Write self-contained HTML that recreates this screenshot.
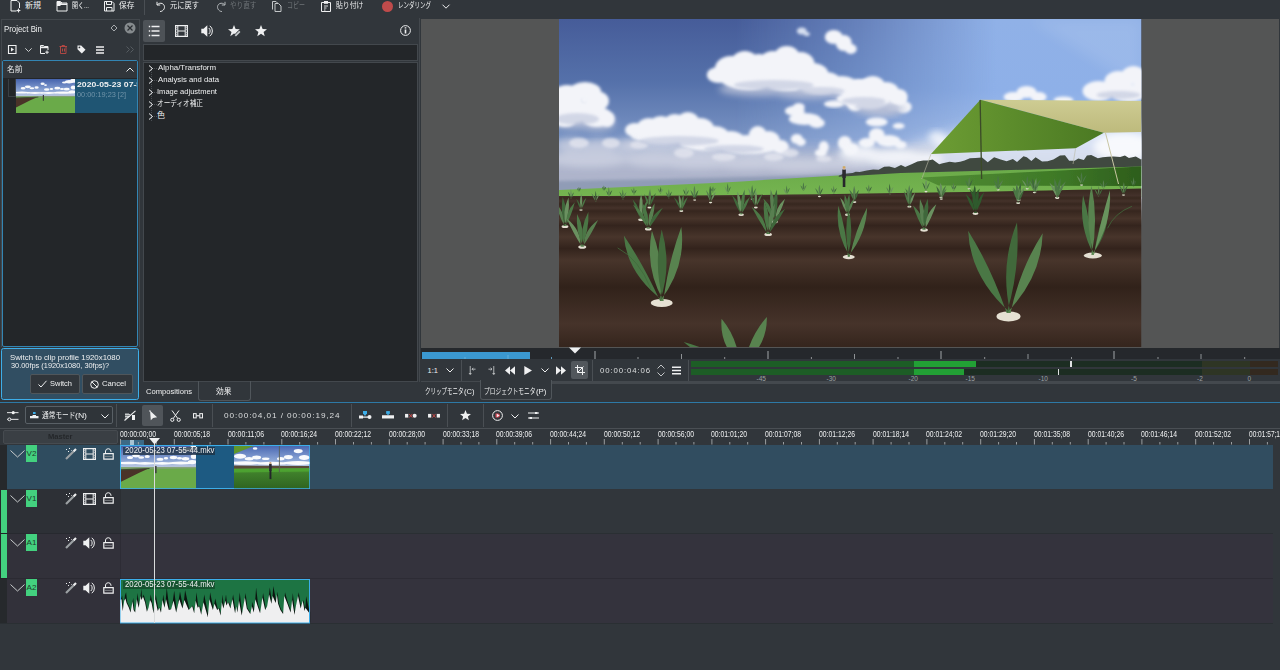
<!DOCTYPE html>
<html lang="ja"><head>
<meta charset="utf-8">
<title>Kdenlive</title>
<style>
*{box-sizing:border-box;margin:0;padding:0}
html,body{width:1280px;height:670px;overflow:hidden;background:#31363b}
body{position:relative;font-family:"Liberation Sans","Noto Sans CJK JP",sans-serif;font-size:8px;color:#eff0f1;line-height:1}
.a{position:absolute}
.t{position:absolute;white-space:nowrap;line-height:12px;height:12px;transform-origin:0 0;display:inline-block}
.dk{background:#232629}
svg{position:absolute;overflow:visible}
.mono{font-family:"Liberation Sans",sans-serif;letter-spacing:.9px}
.s{fill:none;stroke:#eff0f1;stroke-width:1}
.f{fill:#eff0f1;stroke:none}
.sep{position:absolute;width:1px;background:#4a4f54}
.rl{position:absolute;top:.2px;font-size:9px;line-height:10px;height:10px;white-space:nowrap;transform-origin:0 0;color:#eff0f1}
.tag{position:absolute;left:26px;width:11px;height:17px;background:#43d17f;color:#1f3a2b;font-size:8px;line-height:17px;text-align:center}
</style>
</head>
<body>
<!-- ===== TOP TOOLBAR ===== -->
<div id="topbar" class="a" style="left:0;top:0;width:1280px;height:16px">
<span class="t" style="left: 25px; top: 0px; transform: scaleX(1);">新規</span>
<span class="t" style="left: 71.5px; top: 0px; transform: scaleX(0.75);">開く...</span>
<span class="t" style="left: 118.5px; top: 0px; transform: scaleX(0.969);">保存</span>
<span class="t" style="left: 170px; top: 0px; transform: scaleX(0.906);">元に戻す</span>
<span class="t" style="left: 229.5px; top: 0px; color: rgb(110, 115, 119); transform: scaleX(0.828);">やり直す</span>
<span class="t" style="left: 286.5px; top: 0px; color: rgb(110, 115, 119); transform: scaleX(0.75);">コピー</span>
<span class="t" style="left: 335.5px; top: 0px; transform: scaleX(0.859);">貼り付け</span>
<span class="t" style="left: 398px; top: 0px; transform: scaleX(0.688);">レンダリング</span>
<div class="sep" style="left:144px;top:0;height:15px"></div>
<div class="a" style="left:382px;top:1px;width:11px;height:11px;border-radius:6px;background:#bf4b4b"></div>
<!-- new -->
<svg style="left:10px;top:0" width="11" height="12" viewBox="0 0 11 12"><path class="s" d="M1 .5H7L9.5 3V8M1 .5V11H6.5"></path><path class="f" d="M8.5 8l.7 1.8 1.8.7-1.8.7-.7 1.8-.7-1.8-1.8-.7 1.8-.7z"></path></svg>
<!-- open -->
<svg style="left:56px;top:1px" width="12" height="11" viewBox="0 0 12 11"><path class="s" d="M1 10V.5H4.5L6 2H11V10Z"></path><path class="f" d="M1 1H4.5L6 2.5H11V4H5L4 5H1Z"></path></svg>
<!-- save -->
<svg style="left:103.500px;top:1.200px" width="10.500" height="10.500" viewBox="0 0 10.500 10.500"><path class="s" d="M.5 .5H8L10 2.500V10H.5Z"></path><path class="s" d="M2.500 .5V3.500H7.500V.5M2.500 10V6.500H8V10"></path></svg>
<!-- undo -->
<svg style="left:156px;top:.5px" width="10" height="11.500" viewBox="0 0 10 11.500"><path class="s" d="M1 .8V4H4.200M1.300 3.800C2.500 2.300 4.500 1.800 6.300 2.600 8.800 3.800 9.200 7 7.300 9 6.400 10 5.300 10.500 4 10.500"></path></svg>
<!-- redo -->
<svg style="left:215.500px;top:.5px" width="10" height="11.500" viewBox="0 0 10 11.500"><path class="s" style="stroke:#b4b8bb" d="M9 .8V4H5.800M8.700 3.800C7.500 2.300 5.500 1.800 3.700 2.600 1.200 3.800 .8 7 2.700 9 3.600 10 4.700 10.500 6 10.500"></path></svg>
<!-- copy -->
<svg style="left:272px;top:.7px" width="10" height="11" viewBox="0 0 10 11"><path class="s" style="stroke:#c3c6c8" d="M.5 8.500V.5H4L5.500 2M3 2.500H6.500L9 5V10.500H3Z"></path></svg>
<!-- paste -->
<svg style="left:321px;top:1px" width="10.500" height="11" viewBox="0 0 10.500 11"><path class="s" d="M.5 1.500H9.500V10.500H.5Z"></path><path class="f" d="M3 0H7V2.800H3Z"></path><path class="s" style="stroke-width:.9" d="M3 5H7M3 7H5.500M3 9H4.500"></path></svg>
<!-- chevron -->
<svg style="left:441.500px;top:4px" width="8" height="5" viewBox="0 0 8 5"><path class="s" d="M.5 .7L4 4.200L7.500 .7"></path></svg>
</div>

<!-- ===== PROJECT BIN ===== -->
<div id="bin" class="a" style="left:0;top:18px;width:141px;height:384px">
<div class="a" style="left:1px;top:1px;width:139px;height:1px;background:#43484d"></div><div class="a" style="left:.5px;top:1px;width:1.200px;height:328px;background:#43484d"></div><div class="a" style="left:138.500px;top:1px;width:1px;height:328px;background:#43484d"></div>
<span class="t" style="left: 4px; top: 5px; font-size: 8.5px; transform: scaleX(0.924);">Project Bin</span>
<svg style="left:110px;top:6px" width="8" height="8" viewBox="0 0 8 8"><path class="s" style="stroke:#a5a9ac" d="M4 1L7 4L4 7L1 4Z"></path></svg>
<svg style="left:124px;top:4px" width="12" height="12" viewBox="0 0 12 12"><circle cx="6" cy="6" r="5.500" fill="#868b8e"></circle><path d="M3.500 3.500L8.500 8.500M8.500 3.500L3.500 8.500" stroke="#2a2e32" stroke-width="1.200" fill="none"></path></svg>
<!-- bin toolbar icons -->
<svg style="left:8px;top:26.700px" width="9" height="9" viewBox="0 0 9 9"><path class="s" style="stroke-width:1.100" d="M.5 .5H8V8.500H.5Z"></path><path class="f" d="M3 2.500L6 4.500L3 6.500Z"></path></svg>
<svg style="left:24.500px;top:30px" width="7" height="4" viewBox="0 0 7 4"><path class="s" style="stroke:#c9cccd" d="M.3 .3L3.500 3.500L6.700 .3"></path></svg>
<svg style="left:40px;top:26.700px" width="9" height="9" viewBox="0 0 9 9"><path class="s" d="M.5 8.500V.5H3.500L4.500 1.500H8V5M.5 8.500H5"></path><path class="f" d="M.5 1.500H8V3.200H.5Z"></path><path class="s" d="M7 5.500V9M5.300 7.200H8.800"></path></svg>
<svg style="left:59px;top:26.700px" width="9" height="9" viewBox="0 0 9 9"><path d="M.5 1.500H8M3 1.500V.5H5.500V1.500M1.500 1.500V8.500H7V1.500M3.500 3.500V6.500M5.500 3.500V6.500" fill="none" stroke="#c54a45" stroke-width=".85"></path></svg>
<svg style="left:77px;top:26.700px" width="9" height="9" viewBox="0 0 9 9"><path class="f" d="M.5 .5H4.200L8.500 4.800L4.800 8.500L.5 4.200Z"></path><circle cx="2.400" cy="2.400" r=".9" fill="#31363b"></circle></svg>
<svg style="left:96px;top:27.700px" width="8" height="8" viewBox="0 0 8 8"><path class="s" style="stroke-width:1.300" d="M0 1H8M0 4H8M0 7H8"></path></svg>
<svg style="left:126px;top:27.700px" width="8" height="7" viewBox="0 0 8 7"><path class="s" style="stroke:#565c61" d="M.5 .5L3.500 3.500L.5 6.500M4.500 .5L7.500 3.500L4.500 6.500"></path></svg>
<!-- list -->
<div class="a dk" style="left:2px;top:42px;width:136px;height:287px;border:1.500px solid #3385b3;border-radius:2px"></div>
<div class="a" style="left:3px;top:43px;width:134px;height:17px;background:#31363b"></div>
<span class="t" style="left: 7px; top: 46px; transform: scaleX(0.969);">名前</span>
<svg style="left:126px;top:49px" width="8" height="5" viewBox="0 0 8 5"><path class="s" d="M.5 4.500L4 1L7.500 4.500"></path></svg>
<div class="a" style="left:8px;top:61px;width:8px;height:18px;border:1px solid #3a3f44;border-top:none"></div>
<div class="a" style="left:75px;top:61px;width:62px;height:34px;background:#1f5573"></div>
<svg id="binthumb" style="left:16px;top:61px" width="59" height="34" viewBox="0 0 59 34"><defs><linearGradient id="tas" x1="0" y1="0" x2="0" y2="1"><stop offset="0" stop-color="#4563ad"></stop><stop offset=".6" stop-color="#8aa3d3"></stop><stop offset="1" stop-color="#cfd7e8"></stop></linearGradient><filter id="tab"><feGaussianBlur stdDeviation=".7"></feGaussianBlur></filter><clipPath id="tac"><rect width="59" height="34"></rect></clipPath></defs><g clip-path="url(#tac)"><rect width="59" height="19.0" fill="url(#tas)"></rect><g fill="#fff" filter="url(#tab)" opacity=".95"><ellipse cx="7.1" cy="9.2" rx="2.4" ry="1.2"></ellipse><ellipse cx="11.8" cy="7.8" rx="3.0" ry="1.4"></ellipse><ellipse cx="15.9" cy="9.2" rx="2.4" ry="1.0"></ellipse><ellipse cx="20.6" cy="8.5" rx="2.1" ry="1.2"></ellipse><ellipse cx="26.6" cy="4.8" rx="2.1" ry="1.2"></ellipse><ellipse cx="29.5" cy="6.1" rx="1.5" ry="0.9"></ellipse><ellipse cx="30.7" cy="10.5" rx="2.7" ry="1.2"></ellipse><ellipse cx="35.4" cy="9.9" rx="1.8" ry="1.0"></ellipse><ellipse cx="41.3" cy="9.2" rx="3.0" ry="1.4"></ellipse><ellipse cx="46.0" cy="9.9" rx="2.1" ry="1.0"></ellipse><ellipse cx="50.7" cy="10.2" rx="3.0" ry="1.4"></ellipse><ellipse cx="53.1" cy="2.7" rx="4.1" ry="1.7"></ellipse><ellipse cx="57.2" cy="1.7" rx="3.0" ry="2.0"></ellipse><ellipse cx="48.4" cy="3.4" rx="2.4" ry="1.0"></ellipse><ellipse cx="57.2" cy="8.5" rx="2.4" ry="2.0"></ellipse><ellipse cx="5.9" cy="13.6" rx="8.3" ry="1.0"></ellipse><ellipse cx="18.9" cy="13.9" rx="8.3" ry="1.0"></ellipse><ellipse cx="32.5" cy="13.9" rx="8.3" ry="1.0"></ellipse><ellipse cx="47.2" cy="13.6" rx="9.4" ry="1.2"></ellipse><ellipse cx="56.0" cy="12.9" rx="3.5" ry="1.7"></ellipse></g><rect x="0" y="17.0" width="59" height="17.0" fill="#6aaa49"></rect><path d="M0 17.0L59 16.7L59 18.0L0 19.0Z" fill="#8c9a86" opacity=".6"></path><path d="M0 19.0L21.2 18.2L14.8 21.1L0 28.6Z" fill="#4a3328"></path><path d="M0 18.5L22.4 17.7L22.4 18.4L0 19.5Z" fill="#3d4a30"></path><rect x="26.8" y="16.0" width="1.2" height="5.8" fill="#3b3f3a"></rect></g></svg>
<div class="a" style="left:75px;top:61px;width:62px;height:34px;overflow:hidden"><span class="t" style="left: 2px; top: 0px; font-weight: bold; font-size: 8px; transform: scaleX(1.085);">2020-05-23 07-55</span>
<span class="t" style="left: 2px; top: 10px; color: rgb(111, 147, 168); font-size: 8px; transform: scaleX(0.918);">00:00:19;23 [2]</span></div>

<!-- message -->
<div class="a" style="left:1.200px;top:329.800px;width:138px;height:52.400px;background:#314e62;border:1.600px solid #3daee9;border-radius:2.500px"></div>
<span class="t" style="left: 10px; top: 333.5px; font-size: 8px; transform: scaleX(0.978);">Switch to clip profile 1920x1080</span>
<span class="t" style="left: 10.5px; top: 341.8px; font-size: 8px; transform: scaleX(0.922);">30.00fps (1920x1080, 30fps)?</span>
<div class="a" style="left:29.500px;top:356px;width:50px;height:19.500px;background:#31363b;border:1px solid #4f565b;border-radius:2px"></div>
<div class="a" style="left:81.500px;top:356px;width:51px;height:19.500px;background:#31363b;border:1px solid #4f565b;border-radius:2px"></div>
<svg style="left:38px;top:362px" width="9" height="8" viewBox="0 0 9 8"><path class="s" d="M.5 4.500L3 7L8.500 .8"></path></svg>
<svg style="left:90px;top:361.500px" width="9" height="9" viewBox="0 0 9 9"><circle class="s" cx="4.500" cy="4.500" r="3.800"></circle><path class="s" d="M1.800 1.800L7.200 7.200"></path></svg>
<span class="t" style="left: 50px; top: 359.5px; font-size: 8px; transform: scaleX(0.934);">Switch</span>
<span class="t" style="left: 101.5px; top: 359.5px; font-size: 8px; transform: scaleX(0.964);">Cancel</span>
</div>
<!-- ===== EFFECTS ===== -->
<div id="fx" class="a" style="left:142px;top:18px;width:277px;height:384px">
<div class="a" style="left:1px;top:1.500px;width:22px;height:22px;background:#4d5257;border-radius:2px"></div>
<svg style="left:6px;top:7px" width="12" height="12" viewBox="0 0 12 12"><path class="s" style="stroke-width:1.400" d="M3.500 1.500H11.500M3.500 6H11.500M3.500 10.500H11.500M.8 1.500H2.200M.8 6H2.200M.8 10.500H2.200"></path></svg>
<svg style="left:32.500px;top:6.500px" width="13" height="12" viewBox="0 0 13 12"><path class="s" style="stroke-width:1.200" d="M.6 .6H12.400V11.400H.6Z"></path><path class="s" d="M2.800 .6V11.400M10.200 .6V11.400M2.800 6H10.200"></path><path class="s" style="stroke-width:.7;stroke:#bfc2c4" d="M.6 2.500H2.800M.6 4.500H2.800M.6 7.500H2.800M.6 9.500H2.800M10.200 2.500H12.400M10.200 4.500H12.400M10.200 7.500H12.400M10.200 9.500H12.400"></path></svg>
<svg style="left:59px;top:7px" width="13" height="12" viewBox="0 0 13 12"><path class="f" d="M.3 3.800H2.500L6.300 .3V11.700L2.500 8.200H.3Z"></path><path class="s" d="M7.800 3A4 4 0 0 1 7.800 9M8.800 .8A6.500 6.500 0 0 1 8.800 11.200"></path></svg>
<svg style="left:86px;top:7px" width="13" height="12" viewBox="0 0 13 12"><path class="f" d="M6 0L7.600 4.100 11.800 4.300 9.300 6.600 7 9 6 8.600 2.300 11.300 3.500 7 0 4.300 4.400 4.100Z"></path><path class="s" style="stroke-width:1.800;stroke:#c8cbcd" d="M7.300 10.800L11.800 6.300"></path></svg>
<svg style="left:113px;top:7px" width="12" height="12" viewBox="0 0 12 12"><path class="f" d="M6 0L7.600 4.100 12 4.300 8.600 7 9.700 11.300 6 8.800 2.300 11.300 3.400 7 0 4.300 4.400 4.100Z"></path></svg>
<svg style="left:258.300px;top:6.800px" width="11" height="11" viewBox="0 0 11 11"><circle class="s" cx="5.500" cy="5.500" r="4.900"></circle><path class="s" style="stroke-width:1.600" d="M5.500 4.500V8.500M5.500 2.200V3.600"></path></svg>
<div class="a dk" style="left:1px;top:26px;width:274.500px;height:16.500px;border:1px solid #43484d"></div>
<div class="a dk" style="left:1px;top:43.500px;width:274.500px;height:320px;border:1px solid #43484d"></div>
<span class="t" style="left: 15.5px; top: 43.5px; transform: scaleX(0.986);">Alpha/Transform</span>
<span class="t" style="left: 15.5px; top: 55.5px; transform: scaleX(0.966);">Analysis and data</span>
<span class="t" style="left: 15px; top: 67.5px; transform: scaleX(0.943);">Image adjustment</span>
<span class="t" style="left: 15px; top: 79.8px; transform: scaleX(0.83);">オーディオ補正</span>
<span class="t" style="left: 15px; top: 92px; transform: scaleX(1);">色</span>
<svg style="left:6px;top:46px" width="9" height="60" viewBox="0 0 9 60"><path d="M3.500 4V58M4 4.500H9M4 16.500H9M4 28.500H9M4 40.500H9M4 52.500H9" stroke="#4a4f54" stroke-width="1" stroke-dasharray="1 1" fill="none"></path><path class="s" d="M1 1.500L4.500 4.500L1 7.500M1 13.500L4.500 16.500L1 19.500M1 25.500L4.500 28.500L1 31.500M1 37.500L4.500 40.500L1 43.500M1 49.500L4.500 52.500L1 55.500"></path></svg>
<span class="t" style="left: 3.5px; top: 368px; transform: scaleX(0.949);">Compositions</span>
<div class="a" style="left:55.500px;top:363px;width:53px;height:19.500px;border:1px solid #50565b;border-top:none;border-radius:0 0 3px 3px"></div>
<span class="t" style="left: 73.5px; top: 368px; transform: scaleX(0.969);">効果</span>
</div>

<!-- ===== MONITOR ===== -->
<div class="a" style="left:419px;top:18px;width:1px;height:364px;background:#43484d"></div>
<div id="mon" class="a" style="left:421px;top:18.500px;width:857.500px;height:329px;background:#545555"></div>

<svg id="img" style="left:558.500px;top:19px" width="582.500" height="328" viewBox="0 0 583 328" preserveAspectRatio="none"><defs>
<linearGradient id="skyL" x1="0" y1="0" x2="0" y2="1"><stop offset="0" stop-color="#465c99"></stop><stop offset=".35" stop-color="#5571aa"></stop><stop offset=".7" stop-color="#7d97c6"></stop><stop offset="1" stop-color="#b9c4dc"></stop></linearGradient>
<linearGradient id="skyR" x1="0" y1="0" x2="0" y2="1"><stop offset="0" stop-color="#90b1e7"></stop><stop offset=".4" stop-color="#8eb0e8"></stop><stop offset=".75" stop-color="#a9c3ee"></stop><stop offset="1" stop-color="#d6e0f3"></stop></linearGradient>
<linearGradient id="mask" x1="0" y1="0" x2="1" y2="0"><stop offset=".3" stop-color="#fff" stop-opacity="0"></stop><stop offset=".52" stop-color="#fff" stop-opacity=".45"></stop><stop offset=".75" stop-color="#fff" stop-opacity="1"></stop></linearGradient>
<mask id="mR"><rect width="583" height="180" fill="url(#mask)"></rect></mask>
<filter id="b1" x="-20%" y="-20%" width="140%" height="140%"><feGaussianBlur stdDeviation="1.600"></feGaussianBlur></filter>
<filter id="b2" x="-20%" y="-20%" width="140%" height="140%"><feGaussianBlur stdDeviation="3.500"></feGaussianBlur></filter>
<filter id="b3" x="-20%" y="-20%" width="140%" height="140%"><feGaussianBlur stdDeviation="7"></feGaussianBlur></filter>
<filter id="b0" x="-20%" y="-20%" width="140%" height="140%"><feGaussianBlur stdDeviation=".6"></feGaussianBlur></filter>
<linearGradient id="soil" x1="0" y1="172" x2="0" y2="330" gradientUnits="userSpaceOnUse">
<stop offset="0.0000" stop-color="#3a2a22"></stop><stop offset="0.0285" stop-color="#43312a"></stop><stop offset="0.0443" stop-color="#38281f"></stop><stop offset="0.0633" stop-color="#44322a"></stop><stop offset="0.0823" stop-color="#37271f"></stop><stop offset="0.1076" stop-color="#45322a"></stop><stop offset="0.1266" stop-color="#36261e"></stop><stop offset="0.1741" stop-color="#47342a"></stop><stop offset="0.2184" stop-color="#34241d"></stop><stop offset="0.2911" stop-color="#48352b"></stop><stop offset="0.3639" stop-color="#33231c"></stop><stop offset="0.4367" stop-color="#48352b"></stop><stop offset="0.6076" stop-color="#31221a"></stop><stop offset="0.8418" stop-color="#46332a"></stop><stop offset="0.9747" stop-color="#36261e"></stop>
</linearGradient>
<linearGradient id="tarpU" x1="372" y1="0" x2="545" y2="0" gradientUnits="userSpaceOnUse"><stop offset="0" stop-color="#6d9d34"></stop><stop offset=".5" stop-color="#5b8b2b"></stop><stop offset="1" stop-color="#4b7923"></stop></linearGradient>
<linearGradient id="tarpT" x1="0" y1="82" x2="0" y2="114" gradientUnits="userSpaceOnUse"><stop offset="0" stop-color="#cdcb92"></stop><stop offset="1" stop-color="#bdba7c"></stop></linearGradient>
<linearGradient id="grass" x1="0" y1="145" x2="0" y2="176" gradientUnits="userSpaceOnUse"><stop offset="0" stop-color="#69a948"></stop><stop offset="1" stop-color="#75b450"></stop></linearGradient>
<linearGradient id="shad" x1="362" y1="0" x2="583" y2="0" gradientUnits="userSpaceOnUse"><stop offset="0" stop-color="#528d35"></stop><stop offset=".6" stop-color="#3f7a27"></stop><stop offset="1" stop-color="#2d5d1c"></stop></linearGradient>
<clipPath id="ic"><rect width="583" height="328"></rect></clipPath>
</defs>
<g clip-path="url(#ic)">
<rect width="583" height="180" fill="url(#skyL)"></rect>
<rect width="583" height="180" fill="url(#skyR)" mask="url(#mR)"></rect>
<path d="M583 0L470 0L583 70Z" fill="#fff" opacity=".10" filter="url(#b3)"></path>
<ellipse cx="520" cy="150" rx="190" ry="48" fill="#e6ecf8" opacity=".8" filter="url(#b3)"></ellipse>
<rect x="-20" y="130" width="400" height="52" fill="#b6bbd0" opacity=".85" filter="url(#b3)"></rect>
<rect x="300" y="132" width="320" height="50" fill="#d3d9e8" opacity=".75" filter="url(#b3)"></rect>
<rect x="-20" y="148" width="360" height="32" fill="#aeb4cb" opacity=".9" filter="url(#b2)"></rect>
<rect x="320" y="150" width="300" height="30" fill="#cdd3e4" opacity=".9" filter="url(#b2)"></rect>
<g filter="url(#b2)" fill="#b9c1d8" opacity="0.85"><ellipse cx="200" cy="70" rx="40" ry="7"></ellipse><ellipse cx="250" cy="73" rx="36" ry="7"></ellipse><ellipse cx="300" cy="82" rx="26" ry="7"></ellipse><ellipse cx="325" cy="88" rx="20" ry="8"></ellipse></g>
<g filter="url(#b1)" fill="#f3f4f9" opacity="1"><ellipse cx="160" cy="56" rx="12" ry="8"></ellipse><ellipse cx="172" cy="50" rx="16" ry="13"></ellipse><ellipse cx="186" cy="44" rx="14" ry="12"></ellipse><ellipse cx="200" cy="47" rx="13" ry="12"></ellipse><ellipse cx="214" cy="44" rx="14" ry="12"></ellipse><ellipse cx="228" cy="38" rx="13" ry="11"></ellipse><ellipse cx="242" cy="46" rx="14" ry="13"></ellipse><ellipse cx="254" cy="56" rx="16" ry="12"></ellipse><ellipse cx="268" cy="62" rx="14" ry="9"></ellipse><ellipse cx="283" cy="66" rx="16" ry="9"></ellipse><ellipse cx="300" cy="70" rx="18" ry="10"></ellipse><ellipse cx="318" cy="76" rx="17" ry="11"></ellipse><ellipse cx="335" cy="82" rx="12" ry="9"></ellipse><ellipse cx="190" cy="58" rx="30" ry="13"></ellipse><ellipse cx="230" cy="58" rx="32" ry="14"></ellipse><ellipse cx="210" cy="50" rx="20" ry="12"></ellipse><ellipse cx="262" cy="68" rx="22" ry="7"></ellipse><ellipse cx="300" cy="80" rx="22" ry="7"></ellipse><ellipse cx="345" cy="88" rx="8" ry="6"></ellipse></g>
<g filter="url(#b2)" fill="#b4bdd6" opacity="0.9"><ellipse cx="15" cy="100" rx="24" ry="10"></ellipse><ellipse cx="38" cy="104" rx="18" ry="8"></ellipse></g>
<g filter="url(#b1)" fill="#f3f4f9" opacity="1"><ellipse cx="8" cy="78" rx="16" ry="12"></ellipse><ellipse cx="26" cy="72" rx="16" ry="9"></ellipse><ellipse cx="38" cy="82" rx="12" ry="10"></ellipse><ellipse cx="14" cy="92" rx="18" ry="12"></ellipse><ellipse cx="38" cy="98" rx="16" ry="10"></ellipse><ellipse cx="48" cy="100" rx="8" ry="8"></ellipse><ellipse cx="6" cy="100" rx="12" ry="8"></ellipse></g>
<g filter="url(#b2)" fill="#c3cade" opacity="0.9"><ellipse cx="100" cy="126" rx="34" ry="8"></ellipse><ellipse cx="150" cy="130" rx="44" ry="9"></ellipse><ellipse cx="205" cy="134" rx="30" ry="7"></ellipse></g>
<g filter="url(#b1)" fill="#f3f4f9" opacity="1"><ellipse cx="76" cy="111" rx="10" ry="7"></ellipse><ellipse cx="90" cy="108" rx="12" ry="9"></ellipse><ellipse cx="102" cy="106" rx="12" ry="9"></ellipse><ellipse cx="116" cy="105" rx="12" ry="10"></ellipse><ellipse cx="129" cy="102" rx="11" ry="9"></ellipse><ellipse cx="141" cy="109" rx="14" ry="10"></ellipse><ellipse cx="156" cy="116" rx="14" ry="9"></ellipse><ellipse cx="172" cy="121" rx="14" ry="9"></ellipse><ellipse cx="188" cy="124" rx="14" ry="8"></ellipse><ellipse cx="199" cy="116" rx="9" ry="9"></ellipse><ellipse cx="210" cy="121" rx="11" ry="9"></ellipse><ellipse cx="222" cy="128" rx="8" ry="7"></ellipse><ellipse cx="105" cy="116" rx="34" ry="9"></ellipse><ellipse cx="150" cy="123" rx="30" ry="9"></ellipse><ellipse cx="190" cy="128" rx="30" ry="7"></ellipse></g>
<g filter="url(#b2)" fill="#cfd3e2" opacity="0.75"><ellipse cx="12" cy="126" rx="16" ry="7"></ellipse><ellipse cx="40" cy="128" rx="18" ry="8"></ellipse><ellipse cx="66" cy="127" rx="12" ry="7"></ellipse><ellipse cx="30" cy="140" rx="40" ry="8"></ellipse><ellipse cx="95" cy="140" rx="30" ry="8"></ellipse><ellipse cx="140" cy="142" rx="40" ry="8"></ellipse><ellipse cx="190" cy="144" rx="40" ry="7"></ellipse><ellipse cx="240" cy="146" rx="40" ry="7"></ellipse><ellipse cx="280" cy="144" rx="30" ry="7"></ellipse></g>
<g filter="url(#b1)" fill="#e2e4ee" opacity="0.85"><ellipse cx="20" cy="124" rx="10" ry="5"></ellipse><ellipse cx="52" cy="124" rx="9" ry="5"></ellipse><ellipse cx="80" cy="126" rx="9" ry="4"></ellipse><ellipse cx="125" cy="134" rx="10" ry="5"></ellipse><ellipse cx="165" cy="138" rx="12" ry="4"></ellipse><ellipse cx="215" cy="138" rx="10" ry="4"></ellipse><ellipse cx="232" cy="134" rx="8" ry="4"></ellipse><ellipse cx="265" cy="140" rx="8" ry="3"></ellipse></g>
<g filter="url(#b1)" fill="#f3f4f9" opacity="1"><ellipse cx="275" cy="18" rx="9" ry="7"></ellipse><ellipse cx="285" cy="24" rx="8" ry="8"></ellipse><ellipse cx="292" cy="30" rx="6" ry="5"></ellipse></g>
<g filter="url(#b1)" fill="#e4ebf8" opacity="0.9"><ellipse cx="243" cy="12" rx="5" ry="3.5"></ellipse><ellipse cx="248" cy="15" rx="3" ry="2"></ellipse></g>
<g filter="url(#b1)" fill="#f3f4f9" opacity="1"><ellipse cx="236" cy="92" rx="10" ry="5"></ellipse><ellipse cx="246" cy="100" rx="16" ry="6"></ellipse><ellipse cx="258" cy="104" rx="8" ry="5"></ellipse><ellipse cx="240" cy="88" rx="6" ry="4"></ellipse></g>
<g filter="url(#b1)" fill="#f3f4f9" opacity="1"><ellipse cx="275" cy="85" rx="10" ry="3.5"></ellipse></g>
<g filter="url(#b1)" fill="#f3f4f9" opacity="1"><ellipse cx="238" cy="120" rx="6" ry="5"></ellipse><ellipse cx="242" cy="123" rx="5" ry="4"></ellipse></g>
<g filter="url(#b1)" fill="#f3f4f9" opacity="1"><ellipse cx="265" cy="128" rx="5" ry="6"></ellipse><ellipse cx="262" cy="134" rx="6" ry="4"></ellipse></g>
<g filter="url(#b1)" fill="#f3f4f9" opacity="1"><ellipse cx="286" cy="124" rx="7" ry="7"></ellipse><ellipse cx="292" cy="130" rx="8" ry="6"></ellipse></g>
<g filter="url(#b2)" fill="#b4bdd6" opacity="0.8"><ellipse cx="320" cy="90" rx="26" ry="7"></ellipse></g>
<g filter="url(#b1)" fill="#f3f4f9" opacity="1"><ellipse cx="300" cy="72" rx="10" ry="10"></ellipse><ellipse cx="314" cy="66" rx="12" ry="9"></ellipse><ellipse cx="328" cy="72" rx="12" ry="9"></ellipse><ellipse cx="340" cy="78" rx="9" ry="8"></ellipse><ellipse cx="312" cy="82" rx="18" ry="8"></ellipse><ellipse cx="296" cy="84" rx="8" ry="8"></ellipse></g>
<g filter="url(#b1)" fill="#f3f4f9" opacity="1"><ellipse cx="318" cy="103" rx="11" ry="4.5"></ellipse><ellipse cx="340" cy="107" rx="6" ry="3"></ellipse></g>
<g filter="url(#b1)" fill="#f3f4f9" opacity="1"><ellipse cx="318" cy="116" rx="8" ry="7"></ellipse><ellipse cx="330" cy="122" rx="12" ry="6"></ellipse><ellipse cx="308" cy="124" rx="8" ry="5"></ellipse><ellipse cx="342" cy="126" rx="6" ry="4"></ellipse></g>
<g filter="url(#b2)" fill="#f4f6fa" opacity="0.9"><ellipse cx="300" cy="134" rx="20" ry="8"></ellipse><ellipse cx="335" cy="138" rx="30" ry="8"></ellipse><ellipse cx="365" cy="140" rx="20" ry="7"></ellipse></g>
<g filter="url(#b2)" fill="#fff" opacity="0.7"><ellipse cx="378" cy="118" rx="8" ry="6"></ellipse><ellipse cx="386" cy="124" rx="8" ry="5"></ellipse></g>
<g filter="url(#b1)" fill="#f3f4f9" opacity="1"><ellipse cx="455" cy="78" rx="10" ry="5"></ellipse><ellipse cx="468" cy="73" rx="10" ry="6"></ellipse><ellipse cx="480" cy="78" rx="8" ry="5"></ellipse><ellipse cx="505" cy="81" rx="10" ry="3.5"></ellipse></g>
<g filter="url(#b1)" fill="#f3f4f9" opacity="1"><ellipse cx="540" cy="72" rx="16" ry="10"></ellipse><ellipse cx="560" cy="62" rx="14" ry="10"></ellipse><ellipse cx="575" cy="56" rx="12" ry="9"></ellipse><ellipse cx="570" cy="74" rx="18" ry="9"></ellipse><ellipse cx="585" cy="66" rx="10" ry="14"></ellipse></g>
<g filter="url(#b2)" fill="#fff" opacity="0.8"><ellipse cx="565" cy="128" rx="30" ry="14"></ellipse></g>
<g filter="url(#b1)" fill="#b8c0d8" opacity="0.55"><ellipse cx="215" cy="66" rx="40" ry="5"></ellipse><ellipse cx="262" cy="72" rx="24" ry="4"></ellipse><ellipse cx="305" cy="82" rx="22" ry="4"></ellipse><ellipse cx="18" cy="100" rx="22" ry="6"></ellipse><ellipse cx="120" cy="122" rx="40" ry="5"></ellipse><ellipse cx="175" cy="130" rx="30" ry="4"></ellipse><ellipse cx="318" cy="88" rx="22" ry="4"></ellipse><ellipse cx="560" cy="76" rx="22" ry="4"></ellipse></g>
<g filter="url(#b1)" fill="#f3f4f9" opacity="1"><ellipse cx="25.7" cy="80.8" rx="4" ry="4"></ellipse><ellipse cx="128.5" cy="110" rx="4" ry="4"></ellipse><ellipse cx="210" cy="50" rx="5" ry="5"></ellipse></g>
<path d="M-5 162C100 160.500 200 158 300 155L300 160L-5 176Z" fill="#8d9ab4" opacity=".9" filter="url(#b1)"></path>
<path d="M0 171L160 163.800Q260 157.500 342 153Q460 148.500 583 146.600L583 178L0 180Z" fill="url(#grass)"></path>
<path d="M280 156.7L284.0 155.1L288.4 154.4L293.9 154.0L297.0 152.8L301.0 152.9L308.0 151.6L314.4 150.6L319.9 150.7L325.4 147.8L330.5 147.4L336.2 149.0L342.3 146.1L346.5 148.0L352.9 145.3L358.8 142.5L364.7 141.4L369.2 141.4L374.0 140.4L380.5 145.2L384.1 144.3L390.9 142.8L396.4 143.4L401.5 142.8L405.9 141.4L411.2 139.3L416.9 139.0L423.4 138.4L429.1 143.2L435.5 138.2L442.1 140.4L448.0 142.3L454.3 139.9L458.4 142.9L464.9 137.2L468.2 138.2L472.8 142.0L477.0 138.2L483.5 142.4L489.0 142.3L494.8 140.5L501.4 136.4L506.4 136.2L510.6 141.7L516.0 141.8L519.8 139.5L525.3 140.9L528.4 136.5L532.7 135.9L539.3 139.3L544.1 138.3L549.7 137.7L554.9 137.5L561.7 138.0L566.4 136.6L570.4 139.1L577.3 137.6L582.5 140.5L587.1 137.1L583 147.6L342 154.0L280 157.7Z" fill="#3f4a41" filter="url(#b0)"></path>
<path d="M362 158.500L583 147.500L583 167L380 166.500Z" fill="url(#shad)" filter="url(#b0)"></path>
<path d="M421.700 80.800L583 82L583 113L545.300 113.800Z" fill="url(#tarpT)"></path>
<path d="M421.700 80.800L545.300 113.800L517.200 129.200L372.300 135.100Z" fill="url(#tarpU)"></path>
<path d="M421.500 81L423 160" stroke="#3b4a28" stroke-width="1.300" fill="none"></path>
<path d="M547 114L560 165" stroke="#c9c6a4" stroke-width="1" fill="none"></path>
<path d="M517 129.500L514.500 145M372.300 135.100L363 160" stroke="#b9b9a4" stroke-width=".6" fill="none"></path>
<path d="M0 177Q200 177.500 583 169.500L583 328L0 328Z" fill="url(#soil)"></path>
<path d="M283.500 150.500h3.600v8.500h-3.600z" fill="#2b2b30"></path><path d="M284 159h2.600v9h-2.600z" fill="#26262a"></path><circle cx="285.300" cy="149" r="1.500" fill="#d8b08a"></circle><path d="M284 147.500h2.600v1h-2.600z" fill="#caa23a"></path>
<ellipse cx="523" cy="166" rx="1.5" ry="0.8" fill="#e4dfd2"></ellipse><path d="M522.3 165.5Q522.9 160.3 518.0 156.4Q520.2 161.7 522.8 165.5Z" fill="#6a9160"></path><path d="M522.7 165.5Q524.9 159.2 522.9 153.0Q521.0 159.3 523.3 165.5Z" fill="#4c7846"></path><path d="M523.2 165.5Q525.9 161.4 528.2 155.9Q523.2 160.0 523.7 165.5Z" fill="#4a7645"></path>
<path d="M574.4 167.5Q575.4 163.7 572.2 160.9Q572.9 164.6 574.9 167.5Z" fill="#4a7645"></path><path d="M574.7 167.5Q576.8 162.8 575.2 158.1Q573.4 162.8 575.3 167.5Z" fill="#587f50"></path><path d="M575.1 167.5Q577.0 165.0 577.8 161.5Q574.6 164.0 575.6 167.5Z" fill="#3f673b"></path>
<ellipse cx="410.4" cy="169.8" rx="1.5" ry="0.8" fill="#e4dfd2"></ellipse><path d="M409.8 169.3Q410.7 164.7 406.7 161.2Q408.0 165.8 410.3 169.3Z" fill="#4a7645"></path><path d="M410.1 169.3Q412.3 163.7 410.6 158.1Q408.7 163.7 410.7 169.3Z" fill="#587f50"></path><path d="M410.5 169.3Q412.8 165.3 414.2 160.3Q410.2 164.3 411.0 169.3Z" fill="#3f673b"></path>
<ellipse cx="468.6" cy="169.8" rx="1.5" ry="0.8" fill="#e4dfd2"></ellipse><path d="M467.9 169.3Q468.3 164.2 463.2 160.7Q465.6 165.8 468.4 169.3Z" fill="#6a9160"></path><path d="M468.3 169.3Q470.6 163.0 468.8 156.7Q466.7 163.0 468.9 169.3Z" fill="#4c7846"></path><path d="M468.8 169.3Q471.4 165.6 473.5 160.4Q468.6 164.2 469.3 169.3Z" fill="#4a7645"></path>
<path d="M544.4 169.5Q544.8 165.8 540.7 163.6Q542.6 167.3 544.9 169.5Z" fill="#4a7645"></path><path d="M544.7 169.5Q546.7 165.3 545.0 161.0Q543.3 165.3 545.3 169.5Z" fill="#587f50"></path><path d="M545.1 169.5Q547.5 166.8 549.4 162.8Q545.2 165.5 545.6 169.5Z" fill="#3f673b"></path>
<ellipse cx="439.5" cy="170.7" rx="1.5" ry="0.8" fill="#e4dfd2"></ellipse><path d="M438.8 170.2Q439.8 164.8 435.0 160.7Q436.7 166.1 439.3 170.2Z" fill="#4c7846"></path><path d="M439.1 170.2Q441.6 163.2 439.4 156.3Q437.4 163.2 439.9 170.2Z" fill="#4a7645"></path><path d="M439.7 170.2Q442.5 166.4 444.6 161.1Q439.5 164.9 440.2 170.2Z" fill="#587f50"></path>
<path d="M438.2 170.5Q438.9 167.5 435.6 165.8Q436.7 168.8 438.7 170.5Z" fill="#6a9160"></path><path d="M438.5 170.5Q440.5 167.7 438.8 164.9Q437.1 167.7 439.1 170.5Z" fill="#4c7846"></path><path d="M438.9 170.5Q440.8 169.0 441.7 166.2Q438.5 167.7 439.4 170.5Z" fill="#4a7645"></path>
<path d="M394.4 171.5Q395.4 168.2 392.2 166.1Q393.0 169.3 394.9 171.5Z" fill="#4a7645"></path><path d="M394.7 171.5Q396.6 167.6 394.9 163.7Q393.2 167.6 395.3 171.5Z" fill="#587f50"></path><path d="M395.1 171.5Q397.1 169.3 398.0 165.9Q394.8 168.1 395.6 171.5Z" fill="#3f673b"></path>
<path d="M44.4 171.5Q45.6 169.1 43.1 167.7Q43.1 170.1 44.9 171.5Z" fill="#4a7645"></path><path d="M44.7 171.5Q46.6 168.9 44.8 166.5Q43.2 169.0 45.3 171.5Z" fill="#587f50"></path><path d="M45.1 171.5Q47.0 170.2 47.2 167.7Q44.6 169.0 45.6 171.5Z" fill="#3f673b"></path>
<path d="M244.1 172.1Q244.9 168.6 241.6 166.2Q242.5 169.7 244.6 172.1Z" fill="#4c7846"></path><path d="M244.4 172.1Q246.4 167.6 244.7 163.2Q243.0 167.6 245.0 172.1Z" fill="#4a7645"></path><path d="M244.8 172.1Q246.9 169.4 247.9 165.7Q244.5 168.4 245.3 172.1Z" fill="#587f50"></path>
<ellipse cx="367.3" cy="172.6" rx="1.5" ry="0.8" fill="#e4dfd2"></ellipse><path d="M366.7 172.1Q367.6 167.1 363.6 163.2Q364.9 168.1 367.2 172.1Z" fill="#3f673b"></path><path d="M367.0 172.1Q369.2 166.1 367.4 160.1Q365.5 166.1 367.6 172.1Z" fill="#6a9160"></path><path d="M367.4 172.1Q369.9 168.1 371.5 163.0Q367.3 167.0 367.9 172.1Z" fill="#4c7846"></path>
<path d="M19.4 172.5Q20.4 170.2 17.9 169.1Q18.1 171.4 19.9 172.5Z" fill="#4a7645"></path><path d="M19.7 172.5Q21.6 170.1 19.9 167.8Q18.3 170.2 20.3 172.5Z" fill="#587f50"></path><path d="M20.1 172.5Q21.8 171.0 21.8 168.6Q19.4 170.1 20.6 172.5Z" fill="#3f673b"></path>
<ellipse cx="476" cy="173.5" rx="1.8" ry="0.8" fill="#e4dfd2"></ellipse><path d="M475.1 173.0Q476.3 166.6 470.6 161.8Q472.7 168.2 475.8 173.0Z" fill="#587f50"></path><path d="M475.4 173.0Q477.6 165.8 473.7 159.3Q473.0 166.5 476.2 173.0Z" fill="#3f673b"></path><path d="M475.8 173.0Q478.8 166.2 477.7 158.9Q474.1 165.7 476.6 173.0Z" fill="#6a9160"></path><path d="M476.2 173.0Q479.8 167.4 482.4 160.1Q476.2 165.7 476.9 173.0Z" fill="#4c7846"></path>
<path d="M153.4 173.5Q154.2 170.2 150.8 168.1Q151.8 171.4 153.9 173.5Z" fill="#4c7846"></path><path d="M153.7 173.5Q155.8 170.4 154.2 167.2Q152.4 170.3 154.3 173.5Z" fill="#4a7645"></path><path d="M154.1 173.5Q156.1 171.8 157.0 168.8Q153.8 170.5 154.6 173.5Z" fill="#587f50"></path>
<path d="M309.4 173.5Q310.2 170.1 306.9 167.8Q307.8 171.2 309.9 173.5Z" fill="#4a7645"></path><path d="M309.7 173.5Q311.8 169.5 310.2 165.4Q308.4 169.4 310.3 173.5Z" fill="#587f50"></path><path d="M310.1 173.5Q312.2 171.1 313.3 167.5Q309.9 169.9 310.6 173.5Z" fill="#3f673b"></path>
<path d="M476.2 173.8Q476.9 170.3 473.5 167.9Q474.5 171.4 476.7 173.8Z" fill="#587f50"></path><path d="M476.5 173.8Q478.4 169.3 476.6 164.9Q475.0 169.4 477.1 173.8Z" fill="#3f673b"></path><path d="M476.9 173.8Q478.8 171.3 479.5 167.7Q476.4 170.3 477.4 173.8Z" fill="#6a9160"></path>
<path d="M168.3 174.5Q169.2 170.4 165.8 167.2Q166.7 171.3 168.8 174.5Z" fill="#6a9160"></path><path d="M168.6 174.5Q170.6 169.3 168.9 164.0Q167.2 169.3 169.2 174.5Z" fill="#4c7846"></path><path d="M169.0 174.5Q171.2 171.5 172.1 167.5Q168.7 170.5 169.5 174.5Z" fill="#4a7645"></path>
<path d="M101.0 174.5Q102.0 171.4 98.8 169.5Q99.6 172.6 101.5 174.5Z" fill="#587f50"></path><path d="M101.3 174.5Q103.4 171.2 101.9 167.8Q100.1 171.1 101.9 174.5Z" fill="#3f673b"></path><path d="M101.7 174.5Q103.6 172.8 104.5 169.8Q101.3 171.5 102.2 174.5Z" fill="#6a9160"></path>
<path d="M274.4 174.5Q275.3 171.2 272.1 169.0Q272.9 172.3 274.9 174.5Z" fill="#4a7645"></path><path d="M274.7 174.5Q276.6 170.4 274.9 166.4Q273.3 170.5 275.3 174.5Z" fill="#587f50"></path><path d="M275.1 174.5Q277.1 172.3 278.1 169.0Q274.8 171.2 275.6 174.5Z" fill="#3f673b"></path>
<path d="M74.4 175.5Q75.3 172.2 72.1 170.1Q72.9 173.3 74.9 175.5Z" fill="#4a7645"></path><path d="M74.7 175.5Q76.7 172.0 75.0 168.6Q73.3 172.0 75.3 175.5Z" fill="#587f50"></path><path d="M75.1 175.5Q77.0 173.8 77.8 170.8Q74.6 172.6 75.6 175.5Z" fill="#3f673b"></path>
<path d="M227.4 175.5Q228.1 171.9 224.7 169.5Q225.7 173.1 227.9 175.5Z" fill="#6a9160"></path><path d="M227.7 175.5Q229.6 170.9 227.8 166.3Q226.2 170.9 228.3 175.5Z" fill="#4c7846"></path><path d="M228.1 175.5Q230.2 172.6 231.1 168.7Q227.8 171.6 228.6 175.5Z" fill="#4a7645"></path>
<ellipse cx="565" cy="176" rx="1.5" ry="0.8" fill="#e4dfd2"></ellipse><path d="M564.3 175.5Q565.1 170.0 560.3 165.7Q562.3 171.2 564.8 175.5Z" fill="#4a7645"></path><path d="M564.7 175.5Q567.1 169.3 565.4 162.9Q563.2 169.1 565.3 175.5Z" fill="#587f50"></path><path d="M565.2 175.5Q567.7 171.3 569.6 165.9Q564.9 170.1 565.7 175.5Z" fill="#3f673b"></path>
<path d="M330.6 175.7Q331.3 171.3 327.3 168.0Q328.9 172.4 331.1 175.7Z" fill="#587f50"></path><path d="M330.9 175.7Q332.7 170.0 330.9 164.5Q329.3 170.1 331.5 175.7Z" fill="#3f673b"></path><path d="M331.3 175.7Q333.4 172.2 334.8 167.8Q331.0 171.2 331.8 175.7Z" fill="#6a9160"></path>
<ellipse cx="260.6" cy="177.5" rx="1.5" ry="0.8" fill="#e4dfd2"></ellipse><path d="M260.0 177.0Q260.5 172.3 256.2 168.9Q258.0 173.6 260.5 177.0Z" fill="#4a7645"></path><path d="M260.3 177.0Q262.5 171.3 260.7 165.7Q258.8 171.3 260.9 177.0Z" fill="#587f50"></path><path d="M260.7 177.0Q263.0 173.6 264.4 169.1Q260.4 172.5 261.2 177.0Z" fill="#3f673b"></path>
<path d="M126.4 177.0Q127.4 173.2 124.2 170.3Q124.9 174.1 126.9 177.0Z" fill="#3f673b"></path><path d="M126.7 177.0Q128.8 172.6 127.1 168.1Q125.4 172.5 127.3 177.0Z" fill="#6a9160"></path><path d="M127.1 177.0Q129.2 174.5 130.2 170.9Q126.8 173.4 127.6 177.0Z" fill="#4c7846"></path>
<path d="M49.4 177.5Q50.4 173.9 47.1 171.4Q47.9 175.0 49.9 177.5Z" fill="#4a7645"></path><path d="M49.7 177.5Q51.6 172.8 49.9 168.0Q48.2 172.8 50.3 177.5Z" fill="#587f50"></path><path d="M50.1 177.5Q52.3 174.9 53.3 171.2Q49.9 173.8 50.6 177.5Z" fill="#3f673b"></path>
<path d="M539.4 177.5Q539.8 173.0 535.6 169.8Q537.5 174.3 539.9 177.5Z" fill="#4a7645"></path><path d="M539.7 177.5Q541.8 172.1 540.3 166.6Q538.5 172.0 540.3 177.5Z" fill="#587f50"></path><path d="M540.1 177.5Q542.5 174.2 544.2 169.7Q540.1 173.0 540.6 177.5Z" fill="#3f673b"></path>
<ellipse cx="382.3" cy="178.2" rx="1.7" ry="0.8" fill="#e4dfd2"></ellipse><path d="M381.5 177.7Q382.6 171.6 377.4 166.9Q379.1 173.0 382.1 177.7Z" fill="#3f673b"></path><path d="M381.9 177.7Q384.4 170.5 381.8 163.4Q379.7 170.6 382.7 177.7Z" fill="#6a9160"></path><path d="M382.5 177.7Q385.7 172.7 387.6 166.2Q382.2 171.2 383.1 177.7Z" fill="#4c7846"></path>
<ellipse cx="498.6" cy="178.8" rx="2.3" ry="1.0" fill="#e4dfd2"></ellipse><path d="M497.5 178.3Q498.7 169.9 490.8 163.6Q494.1 172.0 498.4 178.3Z" fill="#6a9160"></path><path d="M497.9 178.3Q500.7 168.4 495.8 159.3Q494.8 169.2 498.9 178.3Z" fill="#4c7846"></path><path d="M498.3 178.3Q502.7 169.1 502.0 158.9Q496.8 168.1 499.3 178.3Z" fill="#4a7645"></path><path d="M498.8 178.3Q503.6 171.4 507.3 162.3Q499.1 169.2 499.7 178.3Z" fill="#587f50"></path>
<ellipse cx="350.4" cy="179" rx="1.5" ry="0.8" fill="#e4dfd2"></ellipse><path d="M349.7 178.5Q350.8 173.3 346.5 169.2Q347.7 174.4 350.2 178.5Z" fill="#4a7645"></path><path d="M350.0 178.5Q352.6 172.4 350.6 166.1Q348.4 172.3 350.8 178.5Z" fill="#587f50"></path><path d="M350.6 178.5Q353.2 174.0 354.4 168.5Q350.1 172.9 351.1 178.5Z" fill="#3f673b"></path>
<ellipse cx="498.8" cy="179.2" rx="1.5" ry="0.8" fill="#e4dfd2"></ellipse><path d="M498.1 178.7Q498.9 172.9 494.0 168.5Q495.9 174.2 498.6 178.7Z" fill="#6a9160"></path><path d="M498.4 178.7Q501.0 172.6 499.1 166.4Q496.8 172.5 499.2 178.7Z" fill="#4c7846"></path><path d="M499.0 178.7Q501.7 174.7 503.7 169.4Q498.7 173.3 499.5 178.7Z" fill="#4a7645"></path>
<ellipse cx="193.3" cy="180" rx="1.5" ry="0.8" fill="#e4dfd2"></ellipse><path d="M192.6 179.5Q193.5 173.7 189.1 169.1Q190.4 174.9 193.1 179.5Z" fill="#6a9160"></path><path d="M192.9 179.5Q195.4 172.8 193.3 166.1Q191.2 172.8 193.7 179.5Z" fill="#4c7846"></path><path d="M193.5 179.5Q196.1 174.8 197.4 169.1Q193.0 173.7 194.0 179.5Z" fill="#4a7645"></path>
<ellipse cx="382.6" cy="180" rx="1.6" ry="0.8" fill="#e4dfd2"></ellipse><path d="M381.8 179.5Q382.9 173.9 378.0 169.6Q379.7 175.2 382.4 179.5Z" fill="#3f673b"></path><path d="M382.2 179.5Q384.8 172.2 382.6 165.0Q380.3 172.2 383.0 179.5Z" fill="#6a9160"></path><path d="M382.8 179.5Q385.8 175.3 388.0 169.6Q382.7 173.8 383.4 179.5Z" fill="#4c7846"></path>
<path d="M11.4 179.5Q12.2 175.6 8.8 172.8Q9.7 176.7 11.9 179.5Z" fill="#3f673b"></path><path d="M11.7 179.5Q13.7 174.8 12.0 170.1Q10.3 174.8 12.3 179.5Z" fill="#6a9160"></path><path d="M12.1 179.5Q14.2 176.9 15.1 173.2Q11.7 175.8 12.6 179.5Z" fill="#4c7846"></path>
<path d="M109.4 179.5Q110.2 175.7 106.9 172.9Q107.8 176.7 109.9 179.5Z" fill="#4a7645"></path><path d="M109.7 179.5Q111.7 174.7 110.0 170.0Q108.3 174.7 110.3 179.5Z" fill="#587f50"></path><path d="M110.1 179.5Q112.2 176.4 113.0 172.5Q109.7 175.5 110.6 179.5Z" fill="#3f673b"></path>
<ellipse cx="135.8" cy="181" rx="1.5" ry="0.8" fill="#e4dfd2"></ellipse><path d="M135.1 180.5Q136.0 175.1 131.5 170.9Q132.9 176.3 135.6 180.5Z" fill="#4a7645"></path><path d="M135.4 180.5Q137.7 173.5 135.5 166.6Q133.5 173.6 136.2 180.5Z" fill="#587f50"></path><path d="M136.0 180.5Q138.5 176.3 139.6 170.9Q135.3 175.2 136.5 180.5Z" fill="#3f673b"></path>
<ellipse cx="416" cy="181" rx="1.7" ry="0.8" fill="#e4dfd2"></ellipse><path d="M415.2 180.5Q416.1 174.3 410.7 169.7Q412.7 175.8 415.8 180.5Z" fill="#2f5a2d"></path><path d="M415.6 180.5Q418.4 173.3 416.1 166.0Q413.7 173.2 416.4 180.5Z" fill="#2f5a2d"></path><path d="M416.2 180.5Q419.4 175.8 421.4 169.5Q416.0 174.2 416.8 180.5Z" fill="#2f5a2d"></path>
<ellipse cx="460" cy="181" rx="2.0" ry="0.9" fill="#e4dfd2"></ellipse><path d="M459.1 180.5Q460.3 173.4 454.1 168.1Q456.3 175.1 459.8 180.5Z" fill="#4a7645"></path><path d="M459.4 180.5Q461.9 172.2 457.9 164.5Q456.8 172.8 460.2 180.5Z" fill="#587f50"></path><path d="M459.8 180.5Q463.3 172.5 462.2 163.8Q458.1 171.9 460.6 180.5Z" fill="#3f673b"></path><path d="M460.2 180.5Q463.9 175.1 466.2 167.9Q459.9 173.3 460.9 180.5Z" fill="#6a9160"></path>
<path d="M63.4 180.5Q64.2 175.9 60.3 172.4Q61.7 177.0 63.9 180.5Z" fill="#4c7846"></path><path d="M63.7 180.5Q65.6 175.4 63.8 170.3Q62.2 175.4 64.3 180.5Z" fill="#4a7645"></path><path d="M64.1 180.5Q66.2 177.3 67.6 173.0Q63.8 176.2 64.6 180.5Z" fill="#587f50"></path>
<path d="M36.1 182.5Q36.6 177.8 32.4 174.2Q34.2 178.9 36.6 182.5Z" fill="#587f50"></path><path d="M36.4 182.5Q38.4 177.1 36.6 171.8Q35.0 177.1 37.0 182.5Z" fill="#3f673b"></path><path d="M36.8 182.5Q39.1 179.2 40.7 174.8Q36.7 178.1 37.3 182.5Z" fill="#6a9160"></path>
<ellipse cx="295.7" cy="183" rx="1.9" ry="0.9" fill="#e4dfd2"></ellipse><path d="M294.8 182.5Q296.0 175.6 290.4 170.3Q292.1 177.1 295.5 182.5Z" fill="#4a7645"></path><path d="M295.3 182.5Q298.2 174.6 295.4 166.7Q292.9 174.7 296.1 182.5Z" fill="#587f50"></path><path d="M295.9 182.5Q299.0 177.3 300.2 170.8Q295.0 176.0 296.6 182.5Z" fill="#3f673b"></path>
<ellipse cx="151.7" cy="183.6" rx="1.7" ry="0.8" fill="#e4dfd2"></ellipse><path d="M150.9 183.1Q152.1 176.4 147.1 171.0Q148.6 177.6 151.5 183.1Z" fill="#587f50"></path><path d="M151.3 183.1Q153.8 174.9 151.2 166.8Q149.1 175.0 152.1 183.1Z" fill="#3f673b"></path><path d="M151.9 183.1Q155.1 178.7 157.0 172.7Q151.7 177.1 152.5 183.1Z" fill="#6a9160"></path>
<ellipse cx="459.6" cy="184" rx="2.0" ry="0.9" fill="#e4dfd2"></ellipse><path d="M458.7 183.5Q460.0 175.9 453.9 169.8Q455.9 177.4 459.4 183.5Z" fill="#4c7846"></path><path d="M459.0 183.5Q461.6 174.6 457.7 166.2Q456.5 175.1 459.8 183.5Z" fill="#4a7645"></path><path d="M459.4 183.5Q462.8 176.1 461.6 168.2Q457.6 175.5 460.2 183.5Z" fill="#587f50"></path><path d="M459.8 183.5Q463.4 178.1 465.6 170.9Q459.4 176.3 460.5 183.5Z" fill="#3f673b"></path>
<ellipse cx="350.7" cy="187.7" rx="2.1" ry="0.9" fill="#e4dfd2"></ellipse><path d="M349.7 187.2Q351.3 178.9 345.1 172.1Q346.9 180.4 350.5 187.2Z" fill="#4a7645"></path><path d="M350.0 187.2Q353.0 178.7 349.0 170.6Q347.5 179.2 351.0 187.2Z" fill="#587f50"></path><path d="M350.4 187.2Q354.0 179.2 352.7 170.6Q348.6 178.6 351.4 187.2Z" fill="#3f673b"></path><path d="M350.9 187.2Q354.6 181.2 356.5 173.5Q350.3 179.5 351.7 187.2Z" fill="#6a9160"></path>
<ellipse cx="90.5" cy="188.5" rx="2.0" ry="0.9" fill="#e4dfd2"></ellipse><path d="M89.6 188.0Q91.0 180.7 85.0 175.0Q86.9 182.3 90.3 188.0Z" fill="#4a7645"></path><path d="M90.0 188.0Q93.6 179.0 91.1 169.9Q88.0 178.9 91.0 188.0Z" fill="#587f50"></path><path d="M90.7 188.0Q94.6 181.8 97.0 173.9Q90.5 180.1 91.4 188.0Z" fill="#3f673b"></path>
<ellipse cx="197" cy="188.5" rx="1.9" ry="0.9" fill="#e4dfd2"></ellipse><path d="M196.1 188.0Q196.9 180.7 190.6 175.1Q193.1 182.4 196.8 188.0Z" fill="#3f673b"></path><path d="M196.6 188.0Q199.7 179.7 197.0 171.4Q194.4 179.7 197.4 188.0Z" fill="#6a9160"></path><path d="M197.2 188.0Q200.9 182.5 203.6 175.3Q197.2 180.7 197.9 188.0Z" fill="#4c7846"></path>
<ellipse cx="22" cy="191" rx="1.7" ry="0.8" fill="#e4dfd2"></ellipse><path d="M21.2 190.5Q22.4 184.5 17.4 179.9Q19.0 185.9 21.8 190.5Z" fill="#3f673b"></path><path d="M21.6 190.5Q24.5 182.7 22.3 174.8Q19.7 182.6 22.4 190.5Z" fill="#6a9160"></path><path d="M22.2 190.5Q25.4 185.4 27.4 178.8Q22.0 183.9 22.8 190.5Z" fill="#4c7846"></path>
<ellipse cx="122.4" cy="192" rx="2.0" ry="0.9" fill="#e4dfd2"></ellipse><path d="M121.5 191.5Q122.1 183.9 115.0 178.2Q118.2 185.9 122.2 191.5Z" fill="#3f673b"></path><path d="M121.8 191.5Q124.2 182.8 119.9 174.9Q119.1 183.6 122.6 191.5Z" fill="#6a9160"></path><path d="M122.2 191.5Q125.6 183.7 124.7 175.3Q120.5 183.1 123.0 191.5Z" fill="#4c7846"></path><path d="M122.6 191.5Q126.2 185.7 128.9 178.1Q122.2 183.9 123.3 191.5Z" fill="#4a7645"></path>
<ellipse cx="416.8" cy="194.6" rx="3.0" ry="1.3" fill="#e4dfd2"></ellipse><path d="M415.4 194.1Q416.7 183.0 406.9 174.8Q410.7 185.8 416.5 194.1Z" fill="#2f5a2d"></path><path d="M415.9 194.1Q420.0 181.7 414.2 170.1Q412.2 182.5 417.2 194.1Z" fill="#2f5a2d"></path><path d="M416.4 194.1Q421.5 182.6 419.6 170.3Q413.7 181.8 417.7 194.1Z" fill="#2f5a2d"></path><path d="M417.1 194.1Q422.4 184.6 425.5 172.9Q416.2 182.3 418.2 194.1Z" fill="#2f5a2d"></path>
<ellipse cx="182.3" cy="195.8" rx="2.8" ry="1.3" fill="#e4dfd2"></ellipse><path d="M181.0 195.3Q182.4 184.4 173.1 176.0Q176.7 186.8 182.0 195.3Z" fill="#3f673b"></path><path d="M181.4 195.3Q184.7 183.4 178.6 172.5Q177.5 184.4 182.6 195.3Z" fill="#6a9160"></path><path d="M182.0 195.3Q187.0 183.3 185.8 170.4Q179.8 182.4 183.2 195.3Z" fill="#4c7846"></path><path d="M182.6 195.3Q187.6 187.8 191.1 177.9Q182.0 185.3 183.6 195.3Z" fill="#4a7645"></path>
<ellipse cx="288.8" cy="195.8" rx="2.6" ry="1.2" fill="#e4dfd2"></ellipse><path d="M287.6 195.3Q289.1 185.8 281.4 178.4Q283.8 187.9 288.5 195.3Z" fill="#6a9160"></path><path d="M288.0 195.3Q291.2 184.9 286.0 175.4Q284.5 185.8 289.1 195.3Z" fill="#4c7846"></path><path d="M288.5 195.3Q292.6 185.6 290.5 175.3Q285.8 185.1 289.6 195.3Z" fill="#4a7645"></path><path d="M289.1 195.3Q293.6 188.3 295.9 179.2Q288.3 186.2 290.0 195.3Z" fill="#587f50"></path>
<ellipse cx="82" cy="200.7" rx="2.8" ry="1.3" fill="#e4dfd2"></ellipse><path d="M80.7 200.2Q82.3 189.2 73.6 180.3Q76.5 191.3 81.7 200.2Z" fill="#3f673b"></path><path d="M81.3 200.2Q86.0 187.7 82.2 175.1Q78.2 187.6 82.7 200.2Z" fill="#6a9160"></path><path d="M82.3 200.2Q87.2 191.0 89.7 179.8Q81.4 189.0 83.3 200.2Z" fill="#4c7846"></path>
<ellipse cx="215.4" cy="202.7" rx="3.6" ry="1.6" fill="#e4dfd2"></ellipse><path d="M213.7 202.2Q215.5 189.2 204.5 179.4Q208.3 192.4 215.0 202.2Z" fill="#4a7645"></path><path d="M214.3 202.2Q219.0 185.9 211.9 170.6Q209.6 186.9 215.8 202.2Z" fill="#587f50"></path><path d="M215.0 202.2Q220.6 186.7 217.8 170.5Q211.3 186.1 216.5 202.2Z" fill="#3f673b"></path><path d="M215.8 202.2Q222.4 192.5 226.2 179.7Q215.2 189.4 217.1 202.2Z" fill="#6a9160"></path>
<ellipse cx="6" cy="207.6" rx="3.4" ry="1.5" fill="#e4dfd2"></ellipse><path d="M4.4 207.1Q7.0 194.9 -2.6 185.1Q-0.1 197.3 5.6 207.1Z" fill="#587f50"></path><path d="M4.9 207.1Q9.8 192.3 3.7 178.0Q1.0 192.9 6.4 207.1Z" fill="#3f673b"></path><path d="M5.6 207.1Q11.5 193.3 9.5 178.4Q2.8 192.3 7.1 207.1Z" fill="#6a9160"></path><path d="M6.4 207.1Q12.6 196.4 15.8 183.2Q5.6 193.9 7.6 207.1Z" fill="#4c7846"></path>
<ellipse cx="89.3" cy="210" rx="3.3" ry="1.5" fill="#e4dfd2"></ellipse><path d="M87.7 209.5Q88.3 195.7 74.1 185.5Q82.1 199.4 88.9 209.5Z" fill="#4c7846"></path><path d="M88.3 209.5Q91.9 196.0 83.8 184.2Q83.5 197.7 89.7 209.5Z" fill="#4a7645"></path><path d="M88.9 209.5Q95.5 197.9 95.7 184.3Q87.1 195.9 90.3 209.5Z" fill="#587f50"></path><path d="M89.7 209.5Q96.2 201.2 104.0 188.8Q90.1 197.2 90.9 209.5Z" fill="#3f673b"></path>
<ellipse cx="365.4" cy="211" rx="3.8" ry="1.7" fill="#e4dfd2"></ellipse><path d="M363.6 210.5Q366.2 196.9 354.4 186.6Q358.5 200.1 365.0 210.5Z" fill="#4a7645"></path><path d="M364.2 210.5Q369.1 194.6 361.3 179.9Q359.3 195.8 365.9 210.5Z" fill="#587f50"></path><path d="M364.9 210.5Q371.3 195.6 369.1 179.7Q361.5 194.6 366.6 210.5Z" fill="#3f673b"></path><path d="M365.8 210.5Q372.9 199.5 377.6 185.2Q365.2 196.2 367.2 210.5Z" fill="#6a9160"></path>
<ellipse cx="209.3" cy="215.4" rx="3.8" ry="1.7" fill="#e4dfd2"></ellipse><path d="M207.5 214.9Q208.1 199.3 192.7 187.8Q200.9 203.4 208.9 214.9Z" fill="#4c7846"></path><path d="M208.1 214.9Q213.3 197.9 205.2 182.1Q203.5 199.1 209.8 214.9Z" fill="#4a7645"></path><path d="M208.8 214.9Q216.3 200.8 215.9 184.7Q206.6 198.8 210.5 214.9Z" fill="#587f50"></path><path d="M209.7 214.9Q217.9 204.6 226.3 189.8Q210.8 200.1 211.1 214.9Z" fill="#3f673b"></path>
<ellipse cx="23.3" cy="228" rx="4.0" ry="1.8" fill="#e4dfd2"></ellipse><path d="M21.4 227.5Q22.6 211.5 7.7 199.6Q14.8 215.5 22.9 227.5Z" fill="#6a9160"></path><path d="M22.0 227.5Q26.9 210.5 18.1 195.0Q16.6 212.0 23.8 227.5Z" fill="#4c7846"></path><path d="M22.8 227.5Q30.4 211.1 29.4 193.1Q20.2 209.5 24.6 227.5Z" fill="#4a7645"></path><path d="M23.7 227.5Q31.9 216.4 39.1 201.1Q24.2 212.2 25.2 227.5Z" fill="#587f50"></path>
<ellipse cx="534.300" cy="236.500" rx="9" ry="3" fill="#e4dfd2"></ellipse>
<path d="M533.2 236.0Q533.0 205.0 524.5 176.2Q519.8 207.2 535.4 236.0Z" fill="#4a7745"></path>
<path d="M533.1 236.0Q540.0 201.1 533.0 166.4Q525.3 201.3 535.5 236.0Z" fill="#58834f"></path>
<path d="M533.2 236.0Q552.1 212.3 549.0 184.8Q539.2 208.5 535.4 236.0Z" fill="#41693b"></path>
<path d="M533.3 236.0Q553.5 205.2 551.4 171.3Q542.2 202.1 535.3 236.0Z" fill="#68935d"></path>
<path d="M549 209.300Q556 194 573.400 187.300" stroke="#41693b" stroke-width=".8" fill="none"></path>
<ellipse cx="290" cy="238" rx="6" ry="2.200" fill="#e4dfd2"></ellipse>
<path d="M289.0 237.5Q287.6 211.0 279.6 186.8Q276.0 213.3 291.0 237.5Z" fill="#4a7745"></path>
<path d="M289.1 237.5Q295.5 213.8 290.0 190.0Q284.5 213.8 290.9 237.5Z" fill="#41693b"></path>
<path d="M289.0 237.5Q307.7 215.0 308.4 188.4Q296.7 210.9 291.0 237.5Z" fill="#58834f"></path>
<ellipse cx="102.800" cy="283.900" rx="11" ry="4" fill="#e6e1d3"></ellipse>
<path d="M101.2 282.0Q84.0 244.6 64.9 216.6Q67.7 254.0 104.4 282.0Z" fill="#4a7745"></path>
<path d="M101.0 282.0Q106.3 245.4 93.0 211.7Q85.5 248.3 104.5 282.0Z" fill="#58834f"></path>
<path d="M101.2 282.0Q113.2 246.2 102.8 210.5Q94.3 246.2 104.4 282.0Z" fill="#41693b"></path>
<path d="M101.2 282.0Q127.7 247.4 122.4 208.0Q109.5 242.6 104.4 282.0Z" fill="#58834f"></path>
<path d="M92 270Q80 240 58.700 228.900" stroke="#41693b" stroke-width=".8" fill="none"></path>
<ellipse cx="449.900" cy="297.400" rx="12" ry="5" fill="#e6e1d3"></ellipse>
<path d="M448.1 294.0Q432.1 247.8 409.5 211.7Q411.4 257.9 451.9 294.0Z" fill="#4a7745"></path>
<path d="M448.2 294.0Q461.7 249.6 458.4 203.2Q440.7 247.6 451.8 294.0Z" fill="#41693b"></path>
<path d="M448.1 294.0Q482.7 258.6 484.1 214.2Q461.4 249.6 451.9 294.0Z" fill="#58834f"></path>
<path d="M181.2 348.0Q179.5 319.8 162.7 299.8Q160.2 328.0 184.8 348.0Z" fill="#58834f"></path>
<path d="M181.2 348.0Q208.9 327.7 208.0 298.0Q190.1 318.3 184.8 348.0Z" fill="#58834f"></path>
<path d="M181.9 348.0Q150.4 329.7 124.8 323.0Q145.4 341.3 184.1 348.0Z" fill="#4a7745"></path>
</g></svg>
<div id="monruler" class="a" style="left:421px;top:347.500px;width:859px;height:11.500px;background:#25282c"></div>
<div class="a" style="left:421.500px;top:352px;width:108.500px;height:7px;background:#3b98d0"></div>
<svg style="left:421px;top:347px" width="859" height="12" viewBox="0 0 859 12"><path d="M174 4V12M347 4V12M520 4V12M693 4V12" stroke="#8e9295" stroke-width="1.200" fill="none"></path><path d="M260.500 7V12M433.500 7V12M607 7V12M780 7V12" stroke="#8e9295" stroke-width="1" fill="none"></path><path d="M217 10V12M303.700 10V12M390.400 10V12M477 10V12M563.700 10V12M650.500 10V12M737 10V12M823.700 10V12" stroke="#8e9295" stroke-width="1" fill="none"></path><path d="M44 10V12M87 8V12M130.500 10V12" stroke="#6fb6e0" stroke-width=".8" fill="none"></path><path d="M148 .5H160L154 6.500Z" fill="#eff0f1"></path></svg>
<div id="monctl" class="a" style="left:421px;top:359px;width:859px;height:23px">
<span class="t" style="left:6.500px;top:5.500px;font-size:7.500px">1:1</span>
<svg style="left:25px;top:9px" width="8" height="5" viewBox="0 0 8 5"><path class="s" d="M.5 .5L4 4L7.500 .5"></path></svg>
<div class="sep" style="left:39.500px;top:1px;height:21px"></div>
<!-- zone in/out -->
<svg style="left:46.500px;top:6.800px" width="8" height="9" viewBox="0 0 9 10"><path class="s" style="stroke:#c2c5c7" d="M2.500 0V10M1 8.500H4M8.500 3.500H4.500M6 2L4.500 3.500L6 5"></path></svg>
<svg style="left:66.500px;top:6.800px" width="8" height="9" viewBox="0 0 9 10"><path class="s" style="stroke:#c2c5c7" d="M6.500 0V10M5 8.500H8M.5 3.500H4.500M3 2L4.500 3.500L3 5"></path></svg>
<svg style="left:84px;top:7px" width="10" height="9" viewBox="0 0 10 9"><path class="f" d="M0 4.500L5 .3V8.700ZM5 4.500L10 .3V8.700Z"></path></svg>
<svg style="left:103px;top:6.500px" width="8" height="9" viewBox="0 0 8 9"><path class="f" d="M.3 0L8 4.500L.3 9Z"></path></svg>
<svg style="left:119.500px;top:9px" width="8" height="5" viewBox="0 0 8 5"><path class="s" d="M.5 .5L4 4L7.500 .5"></path></svg>
<svg style="left:135px;top:7px" width="10" height="9" viewBox="0 0 10 9"><path class="f" d="M0 .3L5 4.500L0 8.700ZM5 .3L10 4.500L5 8.700Z"></path></svg>
<div class="a" style="left:150px;top:2px;width:17px;height:17.500px;background:#52575c;border-radius:2px"></div>
<svg style="left:153.500px;top:6px" width="10" height="10" viewBox="0 0 10 10"><path class="s" d="M2.500 0V7.500H10M0 2.500H7.500V10M2.500 7.500L8.500 1.500"></path></svg>
<div class="sep" style="left:170.500px;top:1px;height:21px"></div>
<span class="t mono" style="left: 179px; top: 5.5px; font-size: 8px; color: rgb(220, 222, 223); transform: scaleX(0.978);">00:00:04:06</span>
<svg style="left:235.500px;top:5px" width="8" height="13" viewBox="0 0 8 13"><path class="s" style="stroke:#c2c5c7" d="M.5 4.500L4 1L7.500 4.500M.5 8.500L4 12L7.500 8.500"></path></svg>
<svg style="left:251px;top:7px" width="9" height="9" viewBox="0 0 9 9"><path class="s" style="stroke-width:1.400" d="M0 1.200H9M0 4.500H9M0 7.800H9"></path></svg>
<div class="sep" style="left:267px;top:1px;height:21px"></div>
<!-- audio meter -->
<div class="a" style="left:269.500px;top:2px;width:587px;height:5.500px;background:#1c2d22"></div>
<div class="a" style="left:269.500px;top:10px;width:587px;height:5.500px;background:#1c2d22"></div>
<div class="a" style="left:269.500px;top:2px;width:223px;height:5.500px;background:#1d5d26"></div>
<div class="a" style="left:269.500px;top:10px;width:223px;height:5.500px;background:#1d5d26"></div>
<div class="a" style="left:492.500px;top:2px;width:62.500px;height:5.500px;background:#22a035"></div>
<div class="a" style="left:492.500px;top:10px;width:50.500px;height:5.500px;background:#22a035"></div>
<div class="a" style="left:781px;top:2px;width:48px;height:5.500px;background:#2e3524"></div>
<div class="a" style="left:781px;top:10px;width:48px;height:5.500px;background:#2e3524"></div>
<div class="a" style="left:829px;top:2px;width:27.500px;height:5.500px;background:#33291f"></div>
<div class="a" style="left:829px;top:10px;width:27.500px;height:5.500px;background:#33291f"></div>
<div class="a" style="left:649px;top:2px;width:1.500px;height:5.500px;background:#dfe1e2"></div>
<div class="a" style="left:636.500px;top:10px;width:1.500px;height:5.500px;background:#dfe1e2"></div>
<span class="t" style="left:335.500px;top:14.500px;font-size:6.500px;color:#9da1a4;line-height:9px;height:9px">-45</span>
<span class="t" style="left:405.500px;top:14.500px;font-size:6.500px;color:#9da1a4;line-height:9px;height:9px">-30</span>
<span class="t" style="left:487.500px;top:14.500px;font-size:6.500px;color:#9da1a4;line-height:9px;height:9px">-20</span>
<span class="t" style="left:544.500px;top:14.500px;font-size:6.500px;color:#9da1a4;line-height:9px;height:9px">-15</span>
<span class="t" style="left:617.500px;top:14.500px;font-size:6.500px;color:#9da1a4;line-height:9px;height:9px">-10</span>
<span class="t" style="left:710px;top:14.500px;font-size:6.500px;color:#9da1a4;line-height:9px;height:9px">-5</span>
<span class="t" style="left:776px;top:14.500px;font-size:6.500px;color:#9da1a4;line-height:9px;height:9px">-2</span>
<span class="t" style="left:826.500px;top:14.500px;font-size:6.500px;color:#9da1a4;line-height:9px;height:9px">0</span>
</div>
<div class="a" style="left:552px;top:380.500px;width:728px;height:3px;background:#44494e"></div>
<div class="a" style="left:421px;top:380.500px;width:59px;height:1px;background:#44494e"></div>
<span class="t" style="left: 425px; top: 386px; transform: scaleX(0.688);">クリップモニタ</span><span class="t" style="left: 463.5px; top: 386px; transform: scaleX(0.945);">(C)</span>
<div class="a" style="left:480px;top:380px;width:71.500px;height:20px;border:1px solid #50565b;border-top:none;border-radius:0 0 3px 3px"></div>
<span class="t" style="left: 484px; top: 386px; transform: scaleX(0.715);">プロジェクトモニタ</span><span class="t" style="left: 535.5px; top: 386px; transform: scaleX(0.984);">(P)</span>
<!-- ===== TIMELINE ===== -->
<div class="a" style="left:0;top:401.500px;width:1280px;height:1.200px;background:#2d79a6"></div>
<div id="tltool" class="a" style="left:0;top:403px;width:1280px;height:25px">
<svg style="left:7px;top:6.500px" width="11.500" height="12" viewBox="0 0 12 12"><path class="s" d="M0 2.500H12M0 9.500H12"></path><circle cx="6.500" cy="2.500" r="1.600" fill="#eff0f1"></circle><circle cx="2.500" cy="9.500" r="1.500" fill="#31363b" stroke="#eff0f1"></circle></svg>
<div class="a" style="left:25px;top:3px;width:87.500px;height:18px;border:1px solid #596066;border-radius:2px;background:#2f3439"></div>
<svg style="left:30px;top:8.500px" width="9" height="7" viewBox="0 0 9 7"><rect x="3" y="0" width="2.600" height="2" fill="#3daee9"></rect><rect x="0" y="4" width="8.500" height="2.300" fill="#eff0f1"></rect><rect x="2.500" y="3" width="3.500" height="1.500" fill="#eff0f1"></rect></svg>
<span class="t" style="left: 41.5px; top: 6.5px; transform: scaleX(0.838);">通常モード</span><span class="t" style="left: 75px; top: 6.5px; transform: scaleX(1.08);">(N)</span>
<svg style="left:101px;top:10.500px" width="8" height="5" viewBox="0 0 8 5"><path class="s" d="M.5 .5L4 4L7.500 .5"></path></svg>
<div class="sep" style="left:116px;top:1px;height:23px"></div>
<!-- icon: disabled-av -->
<svg style="left:124px;top:7px" width="12" height="12" viewBox="0 0 12 12"><path class="s" style="stroke:#c9cccd" d="M1 4.500H6M1 6.500H6M2 3V9M4 3V8"></path><path class="f" d="M8 5H11V10H8Z"></path><path class="s" style="stroke-width:1.100" d="M.5 10.500L11.500 .8"></path></svg>
<div class="a" style="left:142px;top:2px;width:21px;height:21px;background:#50555a;border-radius:2px"></div>
<svg style="left:148.500px;top:7px" width="9" height="11.500" viewBox="0 0 10 12"><path class="f" d="M1.200 .5L2 11L4.500 8.500L9 7.800Z"></path><circle cx="1" cy=".8" r=".8" fill="#eff0f1"></circle></svg>
<svg style="left:170px;top:7px" width="11" height="12" viewBox="0 0 11 12"><path class="s" d="M2 .5L7.800 8.500M9 .5L3.200 8.500"></path><circle class="s" cx="2.300" cy="9.800" r="1.600"></circle><circle class="s" cx="8.700" cy="9.800" r="1.600"></circle></svg>
<svg style="left:192px;top:9.500px" width="12" height="5.500" viewBox="0 0 13 7"><rect class="s" x=".8" y=".8" width="3.400" height="5.400" style="stroke-width:1.300"></rect><rect class="s" x="8.800" y=".8" width="3.400" height="5.400" style="stroke-width:1.300"></rect><path class="s" style="stroke-width:1.500" d="M4.500 3.500H8.500"></path></svg>
<div class="sep" style="left:212px;top:1px;height:23px"></div>
<span class="t mono" style="left: 223.5px; top: 6.5px; font-size: 8px; color: rgb(220, 222, 223); transform: scaleX(1.025);">00:00:04,01 / 00:00:19,24</span>
<div class="sep" style="left:351px;top:1px;height:23px"></div>
<!-- insert / overwrite / extract / lift -->
<svg style="left:359px;top:8px" width="13" height="9" viewBox="0 0 13 9"><rect x="4" y="0" width="4" height="3" fill="#3daee9"></rect><path d="M4.500 3H7.500L6 5Z" fill="#3daee9"></path><rect class="f" x="0" y="4.500" width="4" height="3"></rect><rect class="f" x="4" y="5.500" width="5" height="1.200"></rect><circle class="f" cx="10.500" cy="6" r="2"></circle></svg>
<svg style="left:382px;top:8px" width="12" height="8.500" viewBox="0 0 13 9"><rect x="4.500" y="0" width="4" height="3" fill="#3daee9"></rect><path d="M5 3H8L6.500 4.500Z" fill="#3daee9"></path><rect class="f" x="0" y="4.500" width="13" height="3.500"></rect></svg>
<svg style="left:404.700px;top:10.200px" width="12" height="5.500" viewBox="0 0 13 6"><rect class="f" x="0" y="1" width="3.500" height="4"></rect><path d="M4.500 1L8 5M8 1L4.500 5" stroke="#cf4a48" stroke-width="1" fill="none"></path><circle class="f" cx="10.500" cy="3" r="2.200"></circle></svg>
<svg style="left:427.500px;top:10.200px" width="12" height="5.500" viewBox="0 0 13 6"><rect class="f" x="0" y="1" width="3.500" height="4"></rect><path d="M4.800 1L8.200 5M8.200 1L4.800 5" stroke="#cf4a48" stroke-width="1" fill="none"></path><rect class="f" x="9.500" y="1" width="3.500" height="4"></rect></svg>
<div class="sep" style="left:447px;top:1px;height:23px"></div>
<svg style="left:459.500px;top:7px" width="11" height="11" viewBox="0 0 12 12"><path class="f" d="M6 0L7.600 4.100 12 4.300 8.600 7 9.700 11.300 6 8.800 2.300 11.300 3.400 7 0 4.300 4.400 4.100Z"></path></svg>
<div class="sep" style="left:483px;top:1px;height:23px"></div>
<svg style="left:491.500px;top:7px" width="11" height="11" viewBox="0 0 11 11"><circle class="s" cx="5.500" cy="5.500" r="4.900"></circle><path d="M3.500 3.500H6A2 2 0 0 1 6 7.500H3.500Z" fill="#da4453"></path><path class="f" d="M4.800 3.800L7.500 5.500L4.800 7.200Z"></path></svg>
<svg style="left:511px;top:10.500px" width="8" height="5" viewBox="0 0 8 5"><path class="s" d="M.5 .5L4 4L7.500 .5"></path></svg>
<svg style="left:527.500px;top:8px" width="11" height="9" viewBox="0 0 11 9"><path class="s" style="stroke-width:1" d="M0 2H11M0 7H11"></path><path class="s" style="stroke-width:2" d="M7 2H9.500M1.500 7H4"></path></svg>
</div>
<div class="a" style="left:0;top:428px;width:1280px;height:1px;background:#4a4f54"></div>

<div id="ruler" class="a" style="left:0;top:429px;width:1280px;height:16px">
<div class="a" style="left:2.500px;top:1px;width:115px;height:13.500px;background:#3a3f44;border:1px solid #464b50;border-radius:2px"></div>
<span class="t" style="left: 47.5px; top: 2px; color: rgb(36, 39, 42); font-size: 8px; font-weight: bold; transform: scaleX(0.95);">Master</span>
<div class="a" style="left:120px;top:11px;width:24px;height:4.500px;background:#3c6a86"></div>
<div class="a" style="left:130px;top:11px;width:4px;height:4.500px;background:#a9c4d3"></div>
<span class="rl" style="left: 120px; transform: scaleX(0.757);">00:00:00;00</span>
<span class="rl" style="left: 173.8px; transform: scaleX(0.757);">00:00:05;18</span>
<span class="rl" style="left: 227.5px; transform: scaleX(0.768);">00:00:11;06</span>
<span class="rl" style="left: 281.3px; transform: scaleX(0.757);">00:00:16;24</span>
<span class="rl" style="left: 335px; transform: scaleX(0.757);">00:00:22;12</span>
<span class="rl" style="left: 388.8px; transform: scaleX(0.757);">00:00:28;00</span>
<span class="rl" style="left: 442.6px; transform: scaleX(0.757);">00:00:33;18</span>
<span class="rl" style="left: 496.3px; transform: scaleX(0.757);">00:00:39;06</span>
<span class="rl" style="left: 550.1px; transform: scaleX(0.757);">00:00:44;24</span>
<span class="rl" style="left: 603.8px; transform: scaleX(0.757);">00:00:50;12</span>
<span class="rl" style="left: 657.6px; transform: scaleX(0.757);">00:00:56;00</span>
<span class="rl" style="left: 711.4px; transform: scaleX(0.757);">00:01:01;20</span>
<span class="rl" style="left: 765.1px; transform: scaleX(0.757);">00:01:07;08</span>
<span class="rl" style="left: 818.9px; transform: scaleX(0.757);">00:01:12;26</span>
<span class="rl" style="left: 872.6px; transform: scaleX(0.757);">00:01:18;14</span>
<span class="rl" style="left: 926.4px; transform: scaleX(0.757);">00:01:24;02</span>
<span class="rl" style="left: 980.2px; transform: scaleX(0.757);">00:01:29;20</span>
<span class="rl" style="left: 1033.9px; transform: scaleX(0.757);">00:01:35;08</span>
<span class="rl" style="left: 1087.7px; transform: scaleX(0.757);">00:01:40;26</span>
<span class="rl" style="left: 1141.4px; transform: scaleX(0.757);">00:01:46;14</span>
<span class="rl" style="left: 1195.2px; transform: scaleX(0.757);">00:01:52;02</span>
<span class="rl" style="left: 1249px; transform: scaleX(0.729);">00:01:57;1</span>
<svg style="left:0;top:0" width="1280" height="16" viewBox="0 0 1280 16"><path d="M120.5 10V15.500M138.4 13V15.500M156.3 13V15.500M174.3 10V15.500M192.2 13V15.500M210.1 13V15.500M228.0 10V15.500M245.9 13V15.500M263.9 13V15.500M281.8 10V15.500M299.7 13V15.500M317.6 13V15.500M335.5 10V15.500M353.5 13V15.500M371.4 13V15.500M389.3 10V15.500M407.2 13V15.500M425.1 13V15.500M443.1 10V15.500M461.0 13V15.500M478.9 13V15.500M496.8 10V15.500M514.7 13V15.500M532.7 13V15.500M550.6 10V15.500M568.5 13V15.500M586.4 13V15.500M604.3 10V15.500M622.3 13V15.500M640.2 13V15.500M658.1 10V15.500M676.0 13V15.500M693.9 13V15.500M711.9 10V15.500M729.8 13V15.500M747.7 13V15.500M765.6 10V15.500M783.5 13V15.500M801.5 13V15.500M819.4 10V15.500M837.3 13V15.500M855.2 13V15.500M873.1 10V15.500M891.1 13V15.500M909.0 13V15.500M926.9 10V15.500M944.8 13V15.500M962.7 13V15.500M980.7 10V15.500M998.6 13V15.500M1016.5 13V15.500M1034.4 10V15.500M1052.3 13V15.500M1070.3 13V15.500M1088.2 10V15.500M1106.1 13V15.500M1124.0 13V15.500M1141.9 10V15.500M1159.9 13V15.500M1177.8 13V15.500M1195.7 10V15.500M1213.6 13V15.500M1231.5 13V15.500M1249.5 10V15.500M1267.4 13V15.500" stroke="#9a9ea1" stroke-width="1" fill="none"></path></svg>
</div>
<div id="tracks" class="a" style="left:0;top:0;width:1280px;height:670px;pointer-events:none">
<div class="a" style="left:0;top:444.5px;width:7px;height:44.5px;background:#26292c"></div>
<div class="a" style="left:6.500px;top:444.5px;width:113px;height:44.5px;background:#2f4c5f"></div>
<div class="a" style="left:119.500px;top:444.5px;width:1153.500px;height:44.5px;background:#314d60"></div>
<div class="a" style="left:0;top:488.5px;width:1273px;height:1px;background:rgba(0,0,0,.13)"></div>
<div class="tag" style="top:445.0px">V2</div>
<svg style="left:10px;top:450.0px" width="15" height="8" viewBox="0 0 15 8"><path class="s" style="stroke:#c9cccd" d="M.5 .5L7.500 7L14.500 .5"></path></svg>
<svg style="left:65px;top:448.3px" width="12" height="12" viewBox="0 0 12 12"><path d="M1 11L8.500 3.500" stroke="#9da1a4" stroke-width="2.200" fill="none"></path><path d="M8.500 3.500L11 1" stroke="#eff0f1" stroke-width="2.200" fill="none"></path><path class="f" d="M1 1h1v1h-1zM4 0h1v1h-1zM3 3h1v1h-1zM6 2h.8v.8h-.8z"></path></svg>
<svg style="left:83px;top:448.3px" width="13" height="12" viewBox="0 0 13 12"><path class="s" style="stroke-width:1.200" d="M.6 .6H12.400V11.400H.6Z"></path><path class="s" d="M2.800 .6V11.400M10.200 .6V11.400M2.800 6H10.200"></path><path class="s" style="stroke-width:.7;stroke:#bfc2c4" d="M.6 2.500H2.800M.6 4.500H2.800M.6 7.500H2.800M.6 9.500H2.800M10.200 2.500H12.400M10.200 4.500H12.400M10.200 7.500H12.400M10.200 9.500H12.400"></path></svg>
<svg style="left:103px;top:447.8px" width="11" height="12" viewBox="0 0 11 12"><path class="s" d="M2.500 5.500V3A2.800 2.800 0 0 1 8 3V3.800"></path><path class="s" style="stroke-width:1.200" d="M.8 5.600H10.200V11.200H.8Z"></path><path class="s" style="stroke:#8d9194;stroke-width:.8" d="M1.500 8.400H9.500"></path></svg>
<div class="a" style="left:0;top:489px;width:7px;height:44.5px;background:#26292c"></div>
<div class="a" style="left:1px;top:489.5px;width:5.500px;height:43.5px;background:#43d17f"></div>
<div class="a" style="left:6.500px;top:489px;width:113px;height:44.5px;background:#2d3036"></div>
<div class="a" style="left:119.500px;top:489px;width:1153.500px;height:44.5px;background:#31363b"></div>
<div class="a" style="left:0;top:533.0px;width:1273px;height:1px;background:rgba(0,0,0,.13)"></div>
<div class="tag" style="top:489.5px">V1</div>
<svg style="left:10px;top:494.5px" width="15" height="8" viewBox="0 0 15 8"><path class="s" style="stroke:#c9cccd" d="M.5 .5L7.500 7L14.500 .5"></path></svg>
<svg style="left:65px;top:492.8px" width="12" height="12" viewBox="0 0 12 12"><path d="M1 11L8.500 3.500" stroke="#9da1a4" stroke-width="2.200" fill="none"></path><path d="M8.500 3.500L11 1" stroke="#eff0f1" stroke-width="2.200" fill="none"></path><path class="f" d="M1 1h1v1h-1zM4 0h1v1h-1zM3 3h1v1h-1zM6 2h.8v.8h-.8z"></path></svg>
<svg style="left:83px;top:492.8px" width="13" height="12" viewBox="0 0 13 12"><path class="s" style="stroke-width:1.200" d="M.6 .6H12.400V11.400H.6Z"></path><path class="s" d="M2.800 .6V11.400M10.200 .6V11.400M2.800 6H10.200"></path><path class="s" style="stroke-width:.7;stroke:#bfc2c4" d="M.6 2.500H2.800M.6 4.500H2.800M.6 7.500H2.800M.6 9.500H2.800M10.200 2.500H12.400M10.200 4.500H12.400M10.200 7.500H12.400M10.200 9.500H12.400"></path></svg>
<svg style="left:103px;top:492.3px" width="11" height="12" viewBox="0 0 11 12"><path class="s" d="M2.500 5.500V3A2.800 2.800 0 0 1 8 3V3.800"></path><path class="s" style="stroke-width:1.200" d="M.8 5.600H10.200V11.200H.8Z"></path><path class="s" style="stroke:#8d9194;stroke-width:.8" d="M1.500 8.400H9.500"></path></svg>
<div class="a" style="left:0;top:533.5px;width:7px;height:45.0px;background:#26292c"></div>
<div class="a" style="left:1px;top:534.0px;width:5.500px;height:44.0px;background:#43d17f"></div>
<div class="a" style="left:6.500px;top:533.5px;width:113px;height:45.0px;background:#32313a"></div>
<div class="a" style="left:119.500px;top:533.5px;width:1153.500px;height:45.0px;background:#34333d"></div>
<div class="a" style="left:0;top:578.0px;width:1273px;height:1px;background:rgba(0,0,0,.13)"></div>
<div class="tag" style="top:534.0px">A1</div>
<svg style="left:10px;top:539.0px" width="15" height="8" viewBox="0 0 15 8"><path class="s" style="stroke:#c9cccd" d="M.5 .5L7.500 7L14.500 .5"></path></svg>
<svg style="left:65px;top:537.3px" width="12" height="12" viewBox="0 0 12 12"><path d="M1 11L8.500 3.500" stroke="#9da1a4" stroke-width="2.200" fill="none"></path><path d="M8.500 3.500L11 1" stroke="#eff0f1" stroke-width="2.200" fill="none"></path><path class="f" d="M1 1h1v1h-1zM4 0h1v1h-1zM3 3h1v1h-1zM6 2h.8v.8h-.8z"></path></svg>
<svg style="left:83px;top:537.3px" width="13" height="12" viewBox="0 0 13 12"><path class="f" d="M.3 3.800H2.500L6.300 .3V11.700L2.500 8.200H.3Z"></path><path class="s" d="M7.800 3A4 4 0 0 1 7.800 9M8.800 .8A6.500 6.500 0 0 1 8.800 11.200"></path></svg>
<svg style="left:103px;top:536.8px" width="11" height="12" viewBox="0 0 11 12"><path class="s" d="M2.500 5.500V3A2.800 2.800 0 0 1 8 3V3.800"></path><path class="s" style="stroke-width:1.200" d="M.8 5.600H10.200V11.200H.8Z"></path><path class="s" style="stroke:#8d9194;stroke-width:.8" d="M1.500 8.400H9.500"></path></svg>
<div class="a" style="left:0;top:578.5px;width:7px;height:44.5px;background:#26292c"></div>
<div class="a" style="left:6.500px;top:578.5px;width:113px;height:44.5px;background:#32313a"></div>
<div class="a" style="left:119.500px;top:578.5px;width:1153.500px;height:44.5px;background:#34333d"></div>
<div class="a" style="left:0;top:622.5px;width:1273px;height:1px;background:rgba(0,0,0,.13)"></div>
<div class="tag" style="top:579.0px">A2</div>
<svg style="left:10px;top:584.0px" width="15" height="8" viewBox="0 0 15 8"><path class="s" style="stroke:#c9cccd" d="M.5 .5L7.500 7L14.500 .5"></path></svg>
<svg style="left:65px;top:582.3px" width="12" height="12" viewBox="0 0 12 12"><path d="M1 11L8.500 3.500" stroke="#9da1a4" stroke-width="2.200" fill="none"></path><path d="M8.500 3.500L11 1" stroke="#eff0f1" stroke-width="2.200" fill="none"></path><path class="f" d="M1 1h1v1h-1zM4 0h1v1h-1zM3 3h1v1h-1zM6 2h.8v.8h-.8z"></path></svg>
<svg style="left:83px;top:582.3px" width="13" height="12" viewBox="0 0 13 12"><path class="f" d="M.3 3.800H2.500L6.300 .3V11.700L2.500 8.200H.3Z"></path><path class="s" d="M7.800 3A4 4 0 0 1 7.800 9M8.800 .8A6.500 6.500 0 0 1 8.800 11.200"></path></svg>
<svg style="left:103px;top:581.8px" width="11" height="12" viewBox="0 0 11 12"><path class="s" d="M2.500 5.500V3A2.800 2.800 0 0 1 8 3V3.800"></path><path class="s" style="stroke-width:1.200" d="M.8 5.600H10.200V11.200H.8Z"></path><path class="s" style="stroke:#8d9194;stroke-width:.8" d="M1.500 8.400H9.500"></path></svg>
<div class="a" style="left:119.500px;top:444.500px;width:1px;height:178.500px;background:rgba(0,0,0,.12)"></div>
<div class="a" style="left:120px;top:444.500px;width:190px;height:44.500px;background:#1d5a82;border:1px solid #3daee9"></div>
<svg id="clip1" style="left:121px;top:445.500px" width="75" height="42.500" viewBox="0 0 75 42.500"><defs><linearGradient id="tbs" x1="0" y1="0" x2="0" y2="1"><stop offset="0" stop-color="#4563ad"></stop><stop offset=".6" stop-color="#8aa3d3"></stop><stop offset="1" stop-color="#cfd7e8"></stop></linearGradient><filter id="tbb"><feGaussianBlur stdDeviation=".7"></feGaussianBlur></filter><clipPath id="tbc"><rect width="75" height="42.5"></rect></clipPath></defs><g clip-path="url(#tbc)"><rect width="75" height="23.8" fill="url(#tbs)"></rect><g fill="#fff" filter="url(#tbb)" opacity=".95"><ellipse cx="9.0" cy="11.5" rx="3.0" ry="1.5"></ellipse><ellipse cx="15.0" cy="9.8" rx="3.8" ry="1.7"></ellipse><ellipse cx="20.2" cy="11.5" rx="3.0" ry="1.3"></ellipse><ellipse cx="26.2" cy="10.6" rx="2.6" ry="1.5"></ellipse><ellipse cx="33.8" cy="6.0" rx="2.6" ry="1.5"></ellipse><ellipse cx="37.5" cy="7.6" rx="1.9" ry="1.1"></ellipse><ellipse cx="39.0" cy="13.2" rx="3.4" ry="1.5"></ellipse><ellipse cx="45.0" cy="12.3" rx="2.2" ry="1.3"></ellipse><ellipse cx="52.5" cy="11.5" rx="3.8" ry="1.7"></ellipse><ellipse cx="58.5" cy="12.3" rx="2.6" ry="1.3"></ellipse><ellipse cx="64.5" cy="12.8" rx="3.8" ry="1.7"></ellipse><ellipse cx="67.5" cy="3.4" rx="5.3" ry="2.1"></ellipse><ellipse cx="72.8" cy="2.1" rx="3.8" ry="2.5"></ellipse><ellipse cx="61.5" cy="4.2" rx="3.0" ry="1.3"></ellipse><ellipse cx="72.8" cy="10.6" rx="3.0" ry="2.5"></ellipse><ellipse cx="7.5" cy="17.0" rx="10.5" ry="1.3"></ellipse><ellipse cx="24.0" cy="17.4" rx="10.5" ry="1.3"></ellipse><ellipse cx="41.2" cy="17.4" rx="10.5" ry="1.3"></ellipse><ellipse cx="60.0" cy="17.0" rx="12.0" ry="1.5"></ellipse><ellipse cx="71.2" cy="16.1" rx="4.5" ry="2.1"></ellipse></g><rect x="0" y="21.2" width="75" height="21.2" fill="#6aaa49"></rect><path d="M0 21.2L75 20.8L75 22.5L0 23.8Z" fill="#8c9a86" opacity=".6"></path><path d="M0 23.8L27.0 22.7L18.8 26.4L0 35.7Z" fill="#4a3328"></path><path d="M0 23.2L28.5 22.1L28.5 23.0L0 24.4Z" fill="#3d4a30"></path><rect x="34.1" y="20.0" width="1.5" height="7.2" fill="#3b3f3a"></rect></g></svg>
<svg id="clip2" style="left:233.500px;top:445.500px" width="75.500" height="42.500" viewBox="0 0 75.500 42.500"><defs><linearGradient id="tcs" x1="0" y1="0" x2="0" y2="1"><stop offset="0" stop-color="#4a68b2"></stop><stop offset=".6" stop-color="#8ca6d6"></stop><stop offset="1" stop-color="#d5dcea"></stop></linearGradient><linearGradient id="tcg" x1="0" y1="0" x2="0" y2="1"><stop offset="0" stop-color="#4a9a30"></stop><stop offset=".25" stop-color="#3f7f2b"></stop><stop offset="1" stop-color="#2f6420"></stop></linearGradient><filter id="tcb"><feGaussianBlur stdDeviation=".7"></feGaussianBlur></filter><clipPath id="tcc"><rect width="75.5" height="42.5"></rect></clipPath></defs><g clip-path="url(#tcc)"><rect width="75.5" height="23.8" fill="url(#tcs)"></rect><g fill="#fff" filter="url(#tcb)" opacity=".95"><ellipse cx="6.0" cy="10.2" rx="6.0" ry="2.5"></ellipse><ellipse cx="15.1" cy="12.8" rx="4.5" ry="1.7"></ellipse><ellipse cx="22.6" cy="11.5" rx="4.5" ry="1.9"></ellipse><ellipse cx="31.7" cy="12.8" rx="3.8" ry="1.3"></ellipse><ellipse cx="21.1" cy="2.5" rx="2.3" ry="1.3"></ellipse><ellipse cx="46.8" cy="12.8" rx="3.8" ry="1.7"></ellipse><ellipse cx="54.4" cy="11.1" rx="4.5" ry="2.1"></ellipse><ellipse cx="64.2" cy="5.1" rx="4.5" ry="2.1"></ellipse><ellipse cx="70.2" cy="11.5" rx="5.3" ry="2.5"></ellipse><ellipse cx="11.3" cy="17.0" rx="15.1" ry="1.7"></ellipse><ellipse cx="37.8" cy="17.4" rx="15.1" ry="1.7"></ellipse><ellipse cx="64.2" cy="17.0" rx="15.1" ry="1.9"></ellipse></g><path d="M0 0L19.6 0L0 8.1Z" fill="#5f962b"></path><rect x="0" y="22.1" width="75.5" height="20.4" fill="url(#tcg)"></rect><path d="M0 19.6L75.5 20.0L75.5 22.5L0 23.0Z" fill="#5a4a3a"></path><path d="M0 22.5L75.5 22.1L75.5 25.5L0 26.4Z" fill="#4fa832" opacity=".8"></path><rect x="44.9" y="0" width="0.9" height="26.4" fill="#5a5f55"></rect><rect x="35.1" y="17.8" width="2.6" height="7.2" fill="#2a2c33"></rect><rect x="35.5" y="24.6" width="1.9" height="8.5" fill="#23252a"></rect><circle cx="36.4" cy="17.0" r="1.1" fill="#c9a27e"></circle></g></svg>
<div class="a" style="left:123px;top:446.500px;width:92px;height:8px;background:rgba(30,45,60,.75)"></div>
<span class="t" style="left: 124.5px; top: 444px; font-size: 8.5px; transform: scaleX(0.915);">2020-05-23 07-55-44.mkv</span>
<div class="a" style="left:120px;top:578.500px;width:190px;height:44.500px;background:#1d7443;border:1px solid #3daee9"></div>
<svg style="left:120px;top:578.500px" width="190" height="44.500" viewBox="0 0 190 44.500"><path d="M0.500 44L0.500 20.9L0.3 20.9L1.5 17.0L2.7 31.9L4.2 17.0L5.4 13.9L6.6 24.1L8.9 28.8L10.5 33.4L12.5 19.4L13.6 31.1L15.2 33.4L16.8 14.7L18.7 28.8L20.7 10.0L21.4 20.9L23.0 16.2L25.0 23.3L26.9 32.7L28.5 28.8L30.0 16.2L31.6 24.1L33.5 34.2L35.1 16.2L37.8 31.9L39.4 28.8L41.0 33.8L42.5 16.2L44.5 28.8L46.0 9.2L48.8 31.1L51.1 30.3L53.5 12.3L56.2 33.4L59.3 13.1L62.5 29.5L64.4 11.6L68.7 31.1L72.2 27.2L74.2 34.2L75.7 13.9L77.7 28.8L79.2 27.2L81.2 35.8L83.5 16.2L87.8 38.1L89.4 13.9L92.9 31.1L94.5 20.2L97.2 31.1L98.7 29.5L100.6 36.6L101.8 16.2L103.4 29.5L105.3 16.2L106.5 26.4L108.1 23.3L110.4 29.5L112.4 16.2L115.1 34.2L116.3 27.2L117.4 33.4L119.0 13.9L121.7 36.6L124.9 14.7L126.8 29.5L130.3 35.0L131.9 23.3L133.8 33.4L135.4 9.2L137.4 26.4L140.1 34.2L142.4 14.7L145.2 31.1L147.1 27.2L149.1 9.2L151.4 24.8L152.6 7.7L155.7 24.1L156.9 13.1L158.1 24.8L160.4 31.1L163.1 35.0L164.3 13.9L167.4 24.8L170.6 33.4L172.1 14.7L174.5 35.8L176.0 26.4L178.0 13.9L180.7 29.5L182.7 21.7L184.6 31.9L185.4 17.8L188.9 33.4L189.500 33.4L189.500 44Z" fill="#0c1410" transform="translate(.7,-.6)"></path><path d="M0.500 44L0.500 20.9L0.3 20.9L1.5 20.2L2.7 31.9L4.2 21.7L5.4 19.4L6.6 24.1L8.9 28.8L10.5 33.4L12.5 22.5L13.6 31.1L15.2 33.4L16.8 20.2L18.7 28.8L20.7 17.0L21.4 20.9L23.0 17.8L25.0 23.3L26.9 32.7L28.5 28.8L30.0 20.9L31.6 24.1L33.5 34.2L35.1 20.2L37.8 31.9L39.4 28.8L41.0 33.8L42.5 20.9L44.5 28.8L46.0 20.2L48.8 31.1L51.1 30.3L53.5 21.7L56.2 33.4L59.3 20.2L62.5 29.5L64.4 20.9L68.7 31.1L72.2 27.2L74.2 34.2L75.7 21.7L77.7 28.8L79.2 27.2L81.2 35.8L83.5 23.3L87.8 38.1L89.4 20.2L92.9 31.1L94.5 24.8L97.2 31.1L98.7 29.5L100.6 36.6L101.8 23.3L103.4 29.5L105.3 21.7L106.5 26.4L108.1 23.3L110.4 29.5L112.4 20.2L115.1 34.2L116.3 27.2L117.4 33.4L119.0 21.7L121.7 36.6L124.9 18.6L126.8 29.5L130.3 35.0L131.9 27.2L133.8 33.4L135.4 20.2L137.4 26.4L140.1 34.2L142.4 18.6L145.2 31.1L147.1 27.2L149.1 15.5L151.4 24.8L152.6 17.0L155.7 24.1L156.9 15.5L158.1 24.8L160.4 31.1L163.1 35.0L164.3 17.0L167.4 24.8L170.6 33.4L172.1 20.9L174.5 35.8L176.0 26.4L178.0 17.0L180.7 29.5L182.7 21.7L184.6 31.9L185.4 28.8L188.9 33.4L189.500 33.4L189.500 44Z" fill="#efeff0"></path><path d="M0 44H190" stroke="#3daee9" stroke-width="1"></path><path d="M189.500 0V44" stroke="#3daee9" stroke-width="1"></path></svg>
<div class="a" style="left:123px;top:580.500px;width:92px;height:8px;background:rgba(20,70,40,.7)"></div>
<span class="t" style="left: 124.5px; top: 578px; font-size: 8.5px; transform: scaleX(0.915);">2020-05-23 07-55-44.mkv</span>
<div class="a" style="left:153.500px;top:443px;width:1.200px;height:180px;background:#d9dbdc"></div>
<svg style="left:148.500px;top:438px" width="11" height="6.500" viewBox="0 0 11 6.500"><path class="f" d="M0 0H11L5.500 6.500Z"></path></svg>
</div>


</body></html>
